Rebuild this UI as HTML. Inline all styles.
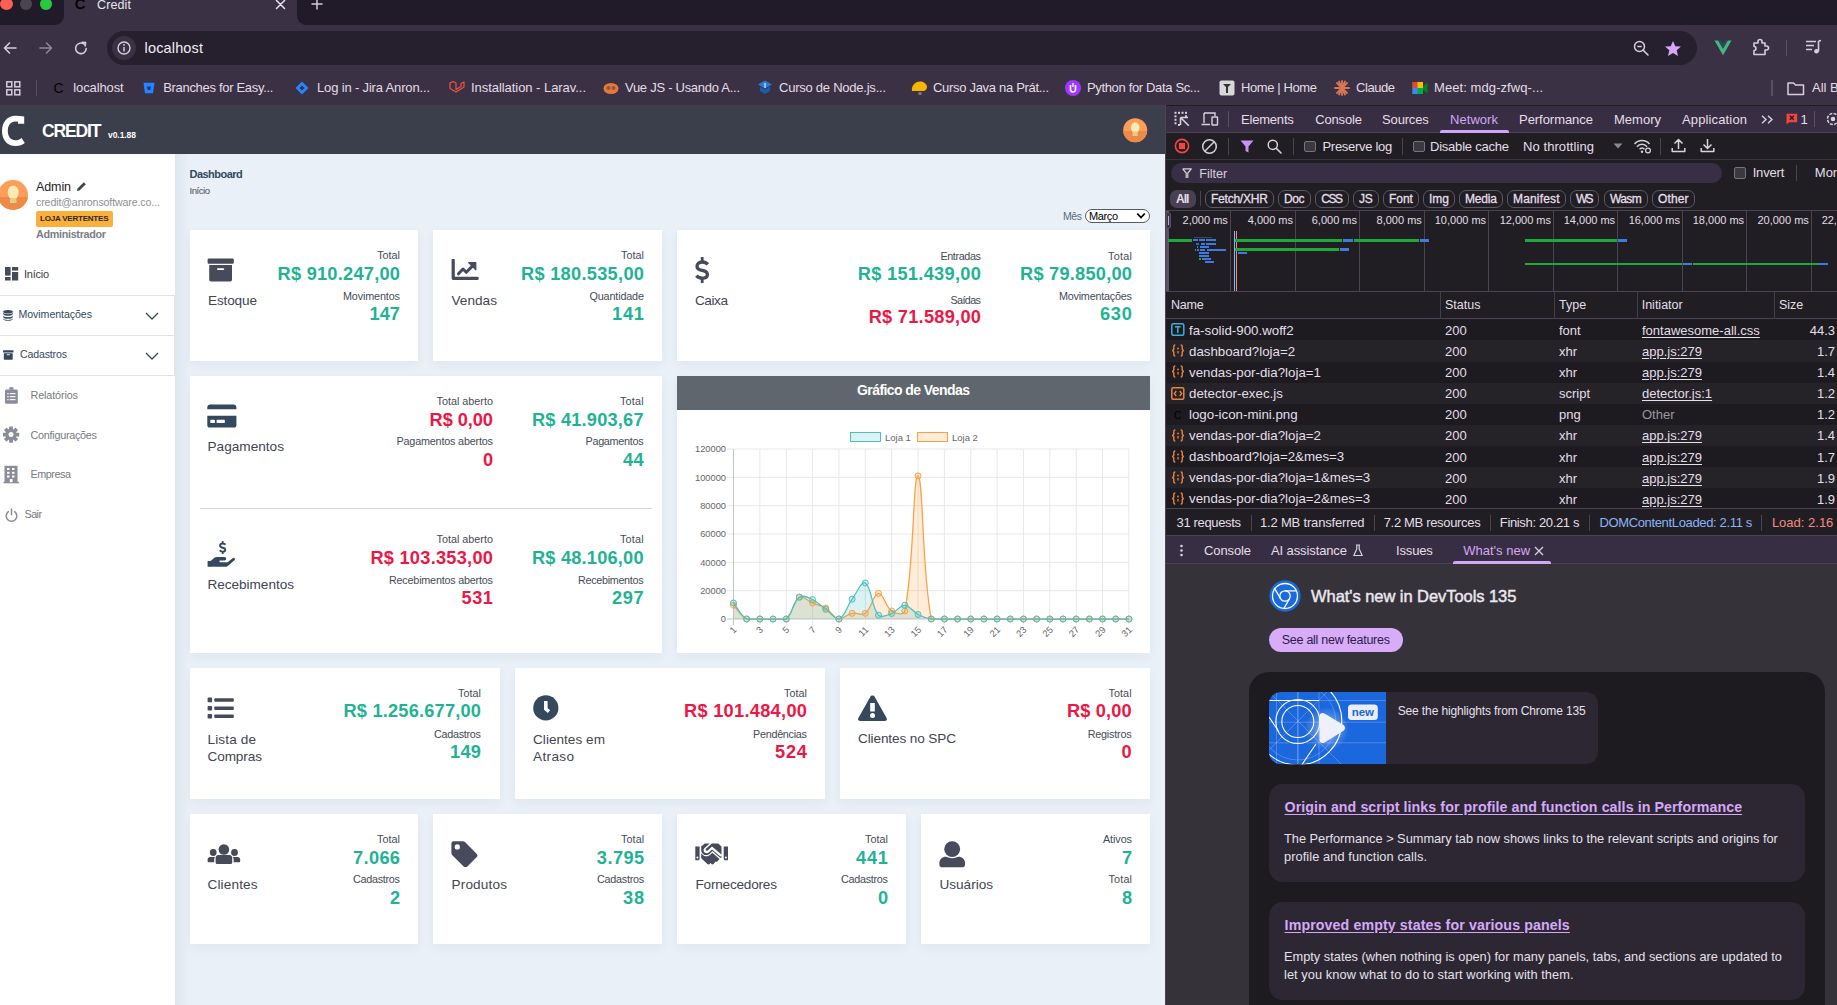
<!DOCTYPE html><html><head><meta charset="utf-8"><style>
html,body{margin:0;padding:0;}
body{width:1837px;height:1005px;position:relative;overflow:hidden;font-family:"Liberation Sans",sans-serif;background:#e9f0f7;}
.t{position:absolute;white-space:pre;}
.r{position:absolute;display:block;}
</style></head><body>
<div class="r" style="left:0px;top:0px;width:1837px;height:105px;background:#3a3244;"></div>
<div class="r" style="left:0px;top:0px;width:64px;height:25px;background:#211b29;border-radius:0 0 9px 0;"></div>
<div class="r" style="left:297px;top:0px;width:1540px;height:25px;background:#211b29;border-radius:0 0 0 9px;"></div>
<div class="r" style="left:0px;top:-2px;width:13px;height:12px;border-radius:50%;background:#fe5f57;"></div>
<div class="r" style="left:20px;top:-2px;width:12px;height:12px;border-radius:50%;background:#4a4550;"></div>
<div class="r" style="left:40px;top:-2px;width:12px;height:12px;border-radius:50%;background:#28c840;"></div>
<div class="t " style="left:75.00px;top:-3.18px;font-size:14px;line-height:15.65px;color:#000;-webkit-text-stroke:0.5px #000;">C</div>
<div class="t " style="left:97.00px;top:-1.83px;font-size:12.5px;line-height:13.98px;color:#ece6f0;letter-spacing:0.131px;">Credit</div>
<svg class="r" style="left:275px;top:0px;" width="11" height="10" viewBox="0 0 11 10"><path d="M1.5 0.5 L9.5 8.5 M9.5 0.5 L1.5 8.5" stroke="#e8e0ee" stroke-width="1.5" stroke-linecap="round"/></svg>
<svg class="r" style="left:311px;top:-1px;" width="12" height="11" viewBox="0 0 12 11"><path d="M6 0 V10 M1 5 H11" stroke="#d6cadf" stroke-width="1.5" stroke-linecap="round"/></svg>
<svg class="r" style="left:2px;top:40px;" width="16" height="16" viewBox="0 0 16 16"><path d="M14 8 H2.5 M7.5 3 L2.5 8 L7.5 13" stroke="#d7cde0" stroke-width="1.6" fill="none" stroke-linecap="round" stroke-linejoin="round"/></svg>
<svg class="r" style="left:38px;top:40px;" width="16" height="16" viewBox="0 0 16 16"><path d="M2 8 H13.5 M8.5 3 L13.5 8 L8.5 13" stroke="#8f8599" stroke-width="1.6" fill="none" stroke-linecap="round" stroke-linejoin="round"/></svg>
<svg class="r" style="left:73px;top:40px;" width="16" height="16" viewBox="0 0 16 16"><path d="M13.2 8.5 A5.3 5.3 0 1 1 11.2 4.2" stroke="#d7cde0" stroke-width="1.6" fill="none" stroke-linecap="round"/><path d="M9.2 2.2 L12.6 2.6 L12.2 6" stroke="#d7cde0" stroke-width="1.6" fill="none" stroke-linecap="round" stroke-linejoin="round"/></svg>
<div class="r" style="left:107px;top:31px;width:1590px;height:34px;background:#261f2e;border-radius:17px;"></div>
<div class="r" style="left:112px;top:36px;width:24px;height:24px;border-radius:50%;background:#3a3244;"></div>
<svg class="r" style="left:117px;top:41px;" width="14" height="14" viewBox="0 0 14 14"><circle cx="7" cy="7" r="6" stroke="#d7cde0" stroke-width="1.4" fill="none"/><path d="M7 6 V10.5" stroke="#d7cde0" stroke-width="1.5"/><circle cx="7" cy="3.9" r="0.9" fill="#d7cde0"/></svg>
<div class="t " style="left:144.60px;top:39.86px;font-size:14.5px;line-height:16.21px;color:#f1ecf4;letter-spacing:0.146px;">localhost</div>
<svg class="r" style="left:1633px;top:40px;" width="17" height="17" viewBox="0 0 17 17"><circle cx="6.5" cy="6.5" r="5" stroke="#d7cde0" stroke-width="1.5" fill="none"/><path d="M4.3 6.5 H8.7" stroke="#d7cde0" stroke-width="1.5"/><path d="M10.2 10.2 L15 15" stroke="#d7cde0" stroke-width="1.6" stroke-linecap="round"/></svg>
<svg class="r" style="left:1664px;top:40px;" width="18" height="17" viewBox="0 0 18 17"><path d="M9 1 L11.3 6.2 L17 6.6 L12.7 10.3 L14 16 L9 13 L4 16 L5.3 10.3 L1 6.6 L6.7 6.2 Z" fill="#d6a6fb"/></svg>
<svg class="r" style="left:1714px;top:40px;" width="18" height="16" viewBox="0 0 18 16"><path d="M0.5 0.5 H4.2 L9 8.8 L13.8 0.5 H17.5 L9 15.3 Z" fill="#41b883"/><path d="M4.2 0.5 H7 L9 3.9 L11 0.5 H13.8 L9 8.8 Z" fill="#34495e"/></svg>
<svg class="r" style="left:1751px;top:38px;" width="19" height="19" viewBox="0 0 19 19"><path d="M3 5 H7 V3.5 A2 2 0 0 1 11 3.5 V5 H14 V8 H15.5 A2 2 0 0 1 15.5 12 H14 V16.5 H3 V12.5 A2 2 0 0 0 3 8.5 Z" stroke="#d7cde0" stroke-width="1.6" fill="none" stroke-linejoin="round"/></svg>
<div class="r" style="left:1785.5px;top:40px;width:1.5px;height:16px;background:#5a5063;"></div>
<svg class="r" style="left:1805px;top:39px;" width="17" height="16" viewBox="0 0 17 16"><path d="M1 2.5 H11 M1 6.5 H9 M1 10.5 H7" stroke="#d7cde0" stroke-width="1.6"/><path d="M13.5 2 V12" stroke="#d7cde0" stroke-width="1.6"/><path d="M13.5 2 L16 1.5" stroke="#d7cde0" stroke-width="1.6"/><circle cx="11.5" cy="12.3" r="2.3" fill="#d7cde0"/></svg>
<svg class="r" style="left:6px;top:81px;" width="15" height="15" viewBox="0 0 15 15"><rect x="0.8" y="0.8" width="5" height="5" stroke="#d7cde0" stroke-width="1.5" fill="none"/><rect x="8.8" y="0.8" width="5" height="5" stroke="#d7cde0" stroke-width="1.5" fill="none"/><rect x="0.8" y="8.8" width="5" height="5" stroke="#d7cde0" stroke-width="1.5" fill="none"/><rect x="8.8" y="8.8" width="5" height="5" stroke="#d7cde0" stroke-width="1.5" fill="none"/></svg>
<div class="r" style="left:35.5px;top:80px;width:1.5px;height:16px;background:#5a5063;"></div>
<div class="t " style="left:73.30px;top:81.22px;font-size:13px;line-height:14.53px;color:#e3dde8;letter-spacing:-0.114px;">localhost</div>
<div class="t " style="left:163.20px;top:81.22px;font-size:13px;line-height:14.53px;color:#e3dde8;letter-spacing:-0.310px;">Branches for Easy...</div>
<div class="t " style="left:317.00px;top:81.22px;font-size:13px;line-height:14.53px;color:#e3dde8;letter-spacing:-0.159px;">Log in - Jira Anron...</div>
<div class="t " style="left:471.00px;top:81.22px;font-size:13px;line-height:14.53px;color:#e3dde8;letter-spacing:-0.050px;">Installation - Larav...</div>
<div class="t " style="left:625.00px;top:81.22px;font-size:13px;line-height:14.53px;color:#e3dde8;letter-spacing:-0.273px;">Vue JS - Usando A...</div>
<div class="t " style="left:779.00px;top:81.22px;font-size:13px;line-height:14.53px;color:#e3dde8;letter-spacing:-0.238px;">Curso de Node.js...</div>
<div class="t " style="left:933.00px;top:81.22px;font-size:13px;line-height:14.53px;color:#e3dde8;letter-spacing:-0.306px;">Curso Java na Prát...</div>
<div class="t " style="left:1087.00px;top:81.22px;font-size:13px;line-height:14.53px;color:#e3dde8;letter-spacing:-0.347px;">Python for Data Sc...</div>
<div class="t " style="left:1241.00px;top:81.22px;font-size:13px;line-height:14.53px;color:#e3dde8;letter-spacing:-0.396px;">Home | Home</div>
<div class="t " style="left:1356.00px;top:81.22px;font-size:13px;line-height:14.53px;color:#e3dde8;letter-spacing:-0.440px;">Claude</div>
<div class="t " style="left:1434.00px;top:81.22px;font-size:13px;line-height:14.53px;color:#e3dde8;letter-spacing:0.080px;">Meet: mdg-zfwq-...</div>
<div class="t " style="left:1812.00px;top:81.22px;font-size:13px;line-height:14.53px;color:#e3dde8;">All Bookmarks</div>
<div class="t " style="left:53.50px;top:80.82px;font-size:14px;line-height:15.65px;color:#000;">C</div>
<svg class="r" style="left:143px;top:82px;" width="12" height="12" viewBox="0 0 12 12"><path d="M0.5 0.8 H11.5 L10 11.2 H2 Z" fill="#2684ff"/><path d="M4 4.5 H8 L7.3 8 H4.7 Z" fill="#0c3a8f"/></svg>
<svg class="r" style="left:295px;top:81px;" width="14" height="14" viewBox="0 0 14 14"><path d="M7 0.5 L13.5 7 L7 13.5 L0.5 7 Z" fill="#2684ff"/><path d="M7 4.5 L9.5 7 L7 9.5 L4.5 7 Z" fill="#3a3244"/></svg>
<svg class="r" style="left:449px;top:80px;" width="16" height="16" viewBox="0 0 16 16"><path d="M1 3 L4 1.5 L7 3 V9.5 L12 6.5 V3.5 L15 2 V7 L7 12 L1 8.5 Z" stroke="#f05340" stroke-width="1.2" fill="none" stroke-linejoin="round"/></svg>
<svg class="r" style="left:603px;top:81px;" width="16" height="14" viewBox="0 0 16 14"><ellipse cx="8" cy="7.5" rx="7.5" ry="5.5" fill="#e8783a"/><circle cx="5.5" cy="7" r="2" fill="#8a5a3c"/><circle cx="10.5" cy="7" r="2" fill="#8a5a3c"/></svg>
<svg class="r" style="left:757px;top:80px;" width="16" height="16" viewBox="0 0 16 16"><path d="M8 0.5 L15 4.5 L8 8.5 L1 4.5 Z" fill="#2a7ad8"/><path d="M3 6.5 V11 L8 14 L13 11 V6.5 L8 9.5 Z" fill="#1b5bb0"/><path d="M8 3 V8" stroke="#fff" stroke-width="1"/></svg>
<svg class="r" style="left:910px;top:80px;" width="18" height="16" viewBox="0 0 18 16"><path d="M2 11 C1 6 5 1.5 10 1.5 C14 1.5 17 4 17 7 C17 9 15.5 11 13 11 Z" fill="#f7b500"/><circle cx="10" cy="13.5" r="1.8" fill="#777"/></svg>
<svg class="r" style="left:1065px;top:80px;" width="16" height="16" viewBox="0 0 16 16"><circle cx="8" cy="8" r="8" fill="#a238ff"/><path d="M5.5 5 V9.5 A2.5 2.5 0 0 0 10.5 9.5 V5" stroke="#fff" stroke-width="1.6" fill="none"/><path d="M8 3 V7" stroke="#fff" stroke-width="1.3"/></svg>
<svg class="r" style="left:1219px;top:80px;" width="16" height="16" viewBox="0 0 16 16"><rect x="0.5" y="0.5" width="15" height="15" rx="2" fill="#d8d8d8"/><path d="M4 4 H12 L9 7 V13 H7 V7 Z" fill="#333"/></svg>
<svg class="r" style="left:1334px;top:80px;" width="16" height="16" viewBox="0 0 16 16"><g stroke="#d97757" stroke-width="1.8" stroke-linecap="round"><path d="M8 1 V15"/><path d="M1 8 H15"/><path d="M3 3 L13 13"/><path d="M13 3 L3 13"/><path d="M5 1.5 L11 14.5"/><path d="M11 1.5 L5 14.5"/></g></svg>
<svg class="r" style="left:1412px;top:81px;" width="16" height="14" viewBox="0 0 16 14"><rect x="0.5" y="1" width="10.5" height="12" fill="#00ac47"/><rect x="0.5" y="1" width="5" height="6" fill="#ea4335"/><rect x="0.5" y="7" width="5" height="6" fill="#4285f4"/><rect x="5.5" y="1" width="5.5" height="6" fill="#fbbc04"/><path d="M11 5 L15.5 2 V12 L11 9 Z" fill="#00832d"/></svg>
<div class="r" style="left:1771px;top:80px;width:1.5px;height:16px;background:#5a5063;"></div>
<svg class="r" style="left:1787px;top:81px;" width="18" height="15" viewBox="0 0 18 15"><path d="M1 2 H6.5 L8.5 4 H16.5 V13.5 H1 Z" stroke="#d7cde0" stroke-width="1.5" fill="none" stroke-linejoin="round"/></svg>
<div class="r" style="left:175px;top:154px;width:991px;height:851px;background:#e9f0f7;"></div>
<div class="r" style="left:0px;top:105px;width:1166px;height:49px;background:#3b3f4b;"></div>
<div class="r" style="left:0px;top:105px;width:1837px;height:1px;background:#433d47;"></div>
<svg class="r" style="left:0px;top:108px;" width="30" height="42" viewBox="0 0 30 42"><path d="M24.2 8.5 C21.5 8 18.5 7.8 15.5 7.8 C7 7.8 2 14.5 2 23 C2 32 7.5 38 15.5 38 C19.5 38 22.5 36.8 24.8 35 L21.6 30 C19.8 31.5 17.8 32.3 15.5 32.3 C10.7 32.3 7.8 28.5 7.8 23 C7.8 17.3 10.7 13.5 15.5 13.5 C16.5 13.5 17.4 13.6 18 13.8 L18 15.8 L24.2 15.8 Z" fill="#fff"/></svg>
<div class="t " style="left:42.00px;top:121.64px;font-size:17.5px;line-height:19.57px;color:#ffffff;font-weight:700;letter-spacing:-1.128px;">CREDIT</div>
<div class="t " style="left:108.00px;top:130.80px;font-size:8.5px;line-height:9.50px;color:#ffffff;font-weight:700;letter-spacing:-0.060px;">v0.1.88</div>
<svg class="r" style="left:1123px;top:118px;" width="25" height="25" viewBox="0 0 25 25"><defs><clipPath id="hc"><circle cx="12.2" cy="12.3" r="12"/></clipPath></defs><g clip-path="url(#hc)"><rect x="0" y="0" width="25" height="25" fill="#fc9d5a"/><rect x="0" y="13" width="25" height="12" fill="#ee8a48"/><ellipse cx="12.2" cy="9.5" rx="4.3" ry="5.3" fill="#ffe9b5"/><rect x="9.6" y="13.5" width="5" height="4.5" fill="#e3cd83"/></g></svg>
<div class="r" style="left:0px;top:154px;width:175px;height:851px;background:#ffffff;"></div>
<div class="r" style="left:175px;top:154px;width:14px;height:851px;background:linear-gradient(90deg,rgba(120,140,170,0.10),rgba(120,140,170,0));"></div>
<div class="r" style="left:0px;top:154px;width:175px;height:6px;background:linear-gradient(180deg,rgba(0,0,0,0.025),rgba(0,0,0,0));"></div>
<svg class="r" style="left:-3px;top:179px;" width="32" height="32" viewBox="0 0 32 32"><defs><clipPath id="ac"><circle cx="16" cy="16" r="15"/></clipPath></defs><g clip-path="url(#ac)"><rect x="0" y="0" width="32" height="32" fill="#fc9d5a"/><rect x="0" y="18" width="32" height="14" fill="#ee8a48"/><ellipse cx="16.2" cy="13.5" rx="5.5" ry="7" fill="#ffe9b5"/><rect x="13" y="19" width="6.5" height="5" fill="#e3cd83"/></g></svg>
<div class="t " style="left:36.00px;top:179.68px;font-size:12.5px;line-height:13.98px;color:#222222;letter-spacing:-0.108px;">Admin</div>
<svg class="r" style="left:76px;top:181px;" width="11" height="11" viewBox="0 0 11 11"><path d="M1 10 L1.5 7.5 L7.8 1.2 L9.8 3.2 L3.5 9.5 Z" fill="#3f4553"/></svg>
<div class="t " style="left:36.00px;top:197.40px;font-size:10.6px;line-height:11.85px;color:#8d9097;letter-spacing:-0.113px;">credit@anronsoftware.co...</div>
<div class="r" style="left:36px;top:211px;width:77px;height:16px;background:#fbb03b;border-radius:2px;"></div>
<div class="t " style="left:40.00px;top:214.75px;font-size:8px;line-height:8.94px;color:#2a2a2a;font-weight:700;letter-spacing:-0.213px;">LOJA VERTENTES</div>
<div class="t " style="left:36.00px;top:228.22px;font-size:10.8px;line-height:12.07px;color:#7b7e85;font-weight:700;letter-spacing:-0.317px;">Administrador</div>
<svg class="r" style="left:5px;top:267px;" width="14" height="14" viewBox="0 0 14 14"><rect x="0" y="0" width="5.6" height="8.6" fill="#464a5a"/><rect x="0" y="10" width="5.6" height="3.5" fill="#464a5a"/><rect x="7" y="0" width="6.2" height="3.6" fill="#464a5a"/><rect x="7" y="5" width="6.2" height="8.5" fill="#464a5a"/></svg>
<div class="t " style="left:24.00px;top:267.53px;font-size:11px;line-height:12.30px;color:#3a3d45;letter-spacing:-0.258px;">Início</div>
<div class="r" style="left:0px;top:295px;width:174px;height:1px;background:#e3e3e3;"></div>
<div class="r" style="left:0px;top:335px;width:174px;height:1px;background:#e3e3e3;"></div>
<div class="r" style="left:0px;top:375px;width:174px;height:1px;background:#e3e3e3;"></div>
<div class="r" style="left:174px;top:295px;width:1px;height:81px;background:#e3e3e3;"></div>
<svg class="r" style="left:3px;top:310px;" width="10" height="11" viewBox="0 0 10 11"><ellipse cx="5" cy="1.8" rx="4.8" ry="1.8" fill="#34495e"/><path d="M0.2 2.5 V4 C0.2 5 2.3 5.8 5 5.8 C7.7 5.8 9.8 5 9.8 4 V2.5 C9.8 3.5 7.7 4.2 5 4.2 C2.3 4.2 0.2 3.5 0.2 2.5Z" fill="#34495e"/><path d="M0.2 5.5 V7 C0.2 8 2.3 8.8 5 8.8 C7.7 8.8 9.8 8 9.8 7 V5.5 C9.8 6.5 7.7 7.2 5 7.2 C2.3 7.2 0.2 6.5 0.2 5.5Z" fill="#34495e"/><path d="M0.2 8.3 V9 C0.2 10 2.3 10.8 5 10.8 C7.7 10.8 9.8 10 9.8 9 V8.3 C9.8 9.3 7.7 10 5 10 C2.3 10 0.2 9.3 0.2 8.3Z" fill="#34495e"/></svg>
<div class="t " style="left:18.50px;top:308.90px;font-size:10.6px;line-height:11.85px;color:#34495e;letter-spacing:-0.061px;">Movimentações</div>
<svg class="r" style="left:145px;top:312px;" width="14" height="8" viewBox="0 0 14 8"><path d="M1 1 L7 7 L13 1" stroke="#34495e" stroke-width="1.3" fill="none"/></svg>
<svg class="r" style="left:3px;top:350px;" width="11" height="10" viewBox="0 0 11 10"><rect x="0" y="0.3" width="10.5" height="2.2" rx="0.5" fill="#34495e"/><rect x="0.8" y="3.3" width="8.9" height="6.4" rx="0.6" fill="#34495e"/><rect x="3.7" y="4.3" width="3.1" height="0.9" fill="#fff"/></svg>
<div class="t " style="left:20.00px;top:348.90px;font-size:10.6px;line-height:11.85px;color:#34495e;letter-spacing:-0.164px;">Cadastros</div>
<svg class="r" style="left:145px;top:352px;" width="14" height="8" viewBox="0 0 14 8"><path d="M1 1 L7 7 L13 1" stroke="#34495e" stroke-width="1.3" fill="none"/></svg>
<svg class="r" style="left:5px;top:387px;" width="13" height="17" viewBox="0 0 13 17"><rect x="0" y="2.5" width="12.8" height="14.3" rx="1.5" fill="#8a8c99"/><path d="M4 2.5 A2.4 2.4 0 0 1 8.8 2.5 Z" fill="#8a8c99"/><circle cx="6.4" cy="1.6" r="1.4" fill="#8a8c99"/><g fill="#fff"><rect x="2.3" y="6" width="1.3" height="1.3"/><rect x="4.7" y="6.1" width="5.8" height="1.1"/><rect x="2.3" y="9" width="1.3" height="1.3"/><rect x="4.7" y="9.1" width="5.8" height="1.1"/><rect x="2.3" y="12" width="1.3" height="1.3"/><rect x="4.7" y="12.1" width="5.8" height="1.1"/></g></svg>
<div class="t " style="left:30.50px;top:389.22px;font-size:10.8px;line-height:12.07px;color:#77797f;letter-spacing:-0.125px;">Relatórios</div>
<svg class="r" style="left:3px;top:426px;" width="17" height="18" viewBox="0 0 17 18"><rect x="6.10" y="0.40" width="3.8" height="4" rx="0.6" fill="#8a8c99" transform="rotate(0 8 8.6)"/><rect x="6.10" y="0.40" width="3.8" height="4" rx="0.6" fill="#8a8c99" transform="rotate(45 8 8.6)"/><rect x="6.10" y="0.40" width="3.8" height="4" rx="0.6" fill="#8a8c99" transform="rotate(90 8 8.6)"/><rect x="6.10" y="0.40" width="3.8" height="4" rx="0.6" fill="#8a8c99" transform="rotate(135 8 8.6)"/><rect x="6.10" y="0.40" width="3.8" height="4" rx="0.6" fill="#8a8c99" transform="rotate(180 8 8.6)"/><rect x="6.10" y="0.40" width="3.8" height="4" rx="0.6" fill="#8a8c99" transform="rotate(225 8 8.6)"/><rect x="6.10" y="0.40" width="3.8" height="4" rx="0.6" fill="#8a8c99" transform="rotate(270 8 8.6)"/><rect x="6.10" y="0.40" width="3.8" height="4" rx="0.6" fill="#8a8c99" transform="rotate(315 8 8.6)"/><circle cx="8" cy="8.6" r="5.6" fill="#8a8c99"/><circle cx="8" cy="8.6" r="2.5" fill="#fff"/></svg>
<div class="t " style="left:30.50px;top:429.22px;font-size:10.8px;line-height:12.07px;color:#77797f;letter-spacing:-0.262px;">Configurações</div>
<svg class="r" style="left:3px;top:465px;" width="17" height="19" viewBox="0 0 17 19"><rect x="1.5" y="0.8" width="13" height="17" fill="#8a8c99"/><rect x="0.5" y="16.8" width="15.5" height="1.5" fill="#8a8c99"/><g fill="#fff"><rect x="4" y="3" width="2.5" height="2"/><rect x="9" y="3" width="2.5" height="2"/><rect x="4" y="6.8" width="2.5" height="2"/><rect x="9" y="6.8" width="2.5" height="2"/><rect x="4" y="10.5" width="2.5" height="2"/><rect x="9" y="10.5" width="2.5" height="2"/><rect x="6.8" y="14" width="2.8" height="3.2"/></g></svg>
<div class="t " style="left:30.50px;top:468.22px;font-size:10.8px;line-height:12.07px;color:#77797f;letter-spacing:-0.453px;">Empresa</div>
<svg class="r" style="left:5px;top:508px;" width="13" height="14" viewBox="0 0 13 14"><path d="M3.4 3.6 A5.3 5.3 0 1 0 9.6 3.6" stroke="#8a8c99" stroke-width="1.5" fill="none" stroke-linecap="round"/><path d="M6.5 1 V6.8" stroke="#8a8c99" stroke-width="1.5" stroke-linecap="round"/></svg>
<div class="t " style="left:24.50px;top:508.22px;font-size:10.8px;line-height:12.07px;color:#77797f;letter-spacing:-0.569px;">Sair</div>
<div class="t " style="left:189.50px;top:168.03px;font-size:11px;line-height:12.30px;color:#34495e;font-weight:700;letter-spacing:-0.520px;">Dashboard</div>
<div class="t " style="left:189.50px;top:185.80px;font-size:9.6px;line-height:10.73px;color:#4a4f57;letter-spacing:-0.489px;">Início</div>
<div class="t " style="left:1063.00px;top:210.89px;font-size:10.5px;line-height:11.74px;color:#5a6b7b;letter-spacing:-0.418px;">Mês</div>
<div class="r" style="left:1085px;top:209px;width:65px;height:14px;background:#ffffff;border:1px solid #555b62;border-radius:7px;box-sizing:border-box;"></div>
<div class="t " style="left:1089.00px;top:209.83px;font-size:11px;line-height:12.30px;color:#000000;letter-spacing:-0.391px;">Março</div>
<svg class="r" style="left:1136px;top:212px;" width="10" height="8" viewBox="0 0 10 8"><path d="M1.2 1.5 L5 5.5 L8.8 1.5" stroke="#000" stroke-width="1.8" fill="none"/></svg>
<div class="r" style="left:190px;top:230px;width:228px;height:131px;background:#fff;box-shadow:0 4px 10px rgba(40,60,90,0.05);"></div>
<div class="r" style="left:433px;top:230px;width:229px;height:131px;background:#fff;box-shadow:0 4px 10px rgba(40,60,90,0.05);"></div>
<div class="r" style="left:677px;top:230px;width:473px;height:131px;background:#fff;box-shadow:0 4px 10px rgba(40,60,90,0.05);"></div>
<svg class="r" style="left:207px;top:258px;" width="27" height="24" viewBox="0 0 27 24"><rect x="0.6" y="0.6" width="26.2" height="5.1" rx="1.2" fill="#464a5a"/><path d="M2.2 7 H25 V21.8 A1.7 1.7 0 0 1 23.3 23.5 H3.9 A1.7 1.7 0 0 1 2.2 21.8 Z" fill="#464a5a"/><rect x="10" y="10.3" width="7.2" height="1.7" rx="0.8" fill="#fff"/></svg>
<div class="t " style="left:208.00px;top:292.98px;font-size:13.6px;line-height:15.20px;color:#3f4553;letter-spacing:-0.151px;">Estoque</div>
<div class="t " style="left:377.20px;top:249.12px;font-size:10.8px;line-height:12.07px;color:#454b57;">Total</div>
<div class="t " style="left:277.60px;top:264.11px;font-size:18.2px;line-height:20.35px;color:#1fb394;font-weight:700;letter-spacing:0.249px;">R$ 910.247,00</div>
<div class="t " style="left:343.00px;top:290.12px;font-size:10.8px;line-height:12.07px;color:#454b57;letter-spacing:-0.136px;">Movimentos</div>
<div class="t " style="left:369.50px;top:303.91px;font-size:18.2px;line-height:20.35px;color:#1fb394;font-weight:700;letter-spacing:0.067px;">147</div>
<svg class="r" style="left:451px;top:259px;" width="28" height="22" viewBox="0 0 28 22"><path d="M2.2 1.2 V19.3 H26.3" stroke="#464a5a" stroke-width="3.2" fill="none" stroke-linecap="round" stroke-linejoin="round"/><path d="M7.5 14.8 L12 10 L15.3 13.3 L21.8 6.6" stroke="#464a5a" stroke-width="3" fill="none" stroke-linejoin="round" stroke-linecap="round"/><path d="M17.6 3.6 H24.8 V10.8 Z" fill="#464a5a" stroke="#464a5a" stroke-width="1.2" stroke-linejoin="round"/></svg>
<div class="t " style="left:451.50px;top:292.98px;font-size:13.6px;line-height:15.20px;color:#3f4553;letter-spacing:0.025px;">Vendas</div>
<div class="t " style="left:621.00px;top:249.12px;font-size:10.8px;line-height:12.07px;color:#454b57;letter-spacing:0.047px;">Total</div>
<div class="t " style="left:521.00px;top:264.11px;font-size:18.2px;line-height:20.35px;color:#1fb394;font-weight:700;letter-spacing:0.299px;">R$ 180.535,00</div>
<div class="t " style="left:589.50px;top:290.12px;font-size:10.8px;line-height:12.07px;color:#454b57;letter-spacing:-0.150px;">Quantidade</div>
<div class="t " style="left:612.00px;top:303.91px;font-size:18.2px;line-height:20.35px;color:#1fb394;font-weight:700;letter-spacing:0.817px;">141</div>
<svg class="r" style="left:694px;top:256px;" width="18" height="28" viewBox="0 0 18 28"><path d="M13.80 8.40 C12.40 6.80 10.60 6.00 8.20 6.00 C5.00 6.00 3.00 7.80 3.00 10.40 C3.00 13.20 5.60 13.80 8.20 14.40 C11.00 15.00 13.40 15.80 13.40 18.40 C13.40 20.80 11.20 22.20 8.20 22.20 C5.80 22.20 3.80 21.20 2.40 19.60" stroke="#464a5a" stroke-width="3.3" fill="none"/><path d="M8.20 1.00 V6.20 M8.20 21.80 V27.00" stroke="#464a5a" stroke-width="2.8"/></svg>
<div class="t " style="left:695.00px;top:292.98px;font-size:13.6px;line-height:15.20px;color:#3f4553;letter-spacing:-0.443px;">Caixa</div>
<div class="t " style="left:940.40px;top:249.62px;font-size:10.8px;line-height:12.07px;color:#454b57;letter-spacing:-0.375px;">Entradas</div>
<div class="t " style="left:857.70px;top:264.31px;font-size:18.2px;line-height:20.35px;color:#1fb394;font-weight:700;letter-spacing:0.324px;">R$ 151.439,00</div>
<div class="t " style="left:950.50px;top:293.52px;font-size:10.8px;line-height:12.07px;color:#454b57;letter-spacing:-0.625px;">Saídas</div>
<div class="t " style="left:868.70px;top:307.01px;font-size:18.2px;line-height:20.35px;color:#ec1745;font-weight:700;letter-spacing:0.274px;">R$ 71.589,00</div>
<div class="t " style="left:1108.00px;top:249.62px;font-size:10.8px;line-height:12.07px;color:#454b57;letter-spacing:0.297px;">Total</div>
<div class="t " style="left:1020.00px;top:264.31px;font-size:18.2px;line-height:20.35px;color:#1fb394;font-weight:700;letter-spacing:0.246px;">R$ 79.850,00</div>
<div class="t " style="left:1058.90px;top:290.42px;font-size:10.8px;line-height:12.07px;color:#454b57;letter-spacing:-0.211px;">Movimentações</div>
<div class="t " style="left:1099.90px;top:303.61px;font-size:18.2px;line-height:20.35px;color:#1fb394;font-weight:700;letter-spacing:0.867px;">630</div>
<div class="r" style="left:190px;top:376px;width:472px;height:277px;background:#fff;box-shadow:0 4px 10px rgba(40,60,90,0.05);"></div>
<div class="r" style="left:677px;top:376px;width:473px;height:277px;background:#fff;box-shadow:0 4px 10px rgba(40,60,90,0.05);"></div>
<svg class="r" style="left:207px;top:404px;" width="30" height="24" viewBox="0 0 30 24"><path d="M0.3 5.2 V3 A2.6 2.6 0 0 1 2.9 0.5 H26.8 A2.6 2.6 0 0 1 29.4 3 V5.2 Z" fill="#34495e"/><path d="M0.3 11.8 H29.4 V21 A2.6 2.6 0 0 1 26.8 23.6 H2.9 A2.6 2.6 0 0 1 0.3 21 Z" fill="#34495e"/><rect x="3.3" y="15.8" width="4.6" height="3.3" rx="0.6" fill="#fff"/><rect x="9.6" y="15.8" width="8.2" height="3.3" rx="0.6" fill="#fff"/></svg>
<div class="t " style="left:207.50px;top:438.68px;font-size:13.6px;line-height:15.20px;color:#3f4553;letter-spacing:0.015px;">Pagamentos</div>
<div class="t " style="left:436.50px;top:395.22px;font-size:10.8px;line-height:12.07px;color:#454b57;letter-spacing:0.006px;">Total aberto</div>
<div class="t " style="left:429.60px;top:409.81px;font-size:18.2px;line-height:20.35px;color:#ec1745;font-weight:700;letter-spacing:-0.058px;">R$ 0,00</div>
<div class="t " style="left:396.50px;top:435.22px;font-size:10.8px;line-height:12.07px;color:#454b57;letter-spacing:-0.186px;">Pagamentos abertos</div>
<div class="t " style="left:482.88px;top:449.81px;font-size:18.2px;line-height:20.35px;color:#ec1745;font-weight:700;">0</div>
<div class="t " style="left:620.00px;top:395.22px;font-size:10.8px;line-height:12.07px;color:#454b57;letter-spacing:0.197px;">Total</div>
<div class="t " style="left:532.00px;top:409.81px;font-size:18.2px;line-height:20.35px;color:#1fb394;font-weight:700;letter-spacing:0.210px;">R$ 41.903,67</div>
<div class="t " style="left:585.50px;top:435.22px;font-size:10.8px;line-height:12.07px;color:#454b57;letter-spacing:-0.282px;">Pagamentos</div>
<div class="t " style="left:623.00px;top:449.81px;font-size:18.2px;line-height:20.35px;color:#1fb394;font-weight:700;letter-spacing:0.355px;">44</div>
<div class="r" style="left:200px;top:508px;width:452px;height:1px;background:#d5d5d5;"></div>
<svg class="r" style="left:207px;top:541px;" width="29" height="27" viewBox="0 0 29 27"><path d="M18.50 3.70 C17.80 2.90 16.90 2.50 15.70 2.50 C14.10 2.50 13.10 3.40 13.10 4.70 C13.10 6.10 14.40 6.40 15.70 6.70 C17.10 7.00 18.30 7.40 18.30 8.70 C18.30 9.90 17.20 10.60 15.70 10.60 C14.50 10.60 13.50 10.10 12.80 9.30" stroke="#34495e" stroke-width="1.9" fill="none"/><path d="M15.70 0.00 V2.60 M15.70 10.40 V13.00" stroke="#34495e" stroke-width="1.7"/><path d="M0.6 25.8 V19.9 H3.7 L7.3 16.7 C8 16.2 8.8 16 9.8 16 H17.5 A1.75 1.75 0 0 1 17.5 19.5 H13 C12.3 19.5 12.3 21.3 13 21.3 H20.5 L26 17 A1.3 1.3 0 0 1 27.7 18.9 L20.5 25.3 C20.2 25.6 19.8 25.8 19.4 25.8 Z" fill="#34495e"/></svg>
<div class="t " style="left:207.50px;top:576.68px;font-size:13.6px;line-height:15.20px;color:#3f4553;letter-spacing:-0.040px;">Recebimentos</div>
<div class="t " style="left:436.50px;top:533.22px;font-size:10.8px;line-height:12.07px;color:#454b57;letter-spacing:0.006px;">Total aberto</div>
<div class="t " style="left:370.40px;top:547.81px;font-size:18.2px;line-height:20.35px;color:#ec1745;font-weight:700;letter-spacing:0.266px;">R$ 103.353,00</div>
<div class="t " style="left:389.00px;top:574.22px;font-size:10.8px;line-height:12.07px;color:#454b57;letter-spacing:-0.214px;">Recebimentos abertos</div>
<div class="t " style="left:461.50px;top:587.81px;font-size:18.2px;line-height:20.35px;color:#ec1745;font-weight:700;letter-spacing:0.567px;">531</div>
<div class="t " style="left:620.00px;top:533.22px;font-size:10.8px;line-height:12.07px;color:#454b57;letter-spacing:0.197px;">Total</div>
<div class="t " style="left:532.00px;top:547.81px;font-size:18.2px;line-height:20.35px;color:#1fb394;font-weight:700;letter-spacing:0.210px;">R$ 48.106,00</div>
<div class="t " style="left:578.00px;top:574.22px;font-size:10.8px;line-height:12.07px;color:#454b57;letter-spacing:-0.312px;">Recebimentos</div>
<div class="t " style="left:612.00px;top:587.81px;font-size:18.2px;line-height:20.35px;color:#1fb394;font-weight:700;letter-spacing:0.617px;">297</div>
<div class="r" style="left:677px;top:376px;width:473px;height:34px;background:#5f666d;"></div>
<div class="t " style="left:857.00px;top:382.72px;font-size:14px;line-height:15.65px;color:#ffffff;font-weight:700;letter-spacing:-0.573px;">Gráfico de Vendas</div>
<svg class="r" style="left:677px;top:410px;" width="473" height="243" viewBox="0 0 473 243"><path d="M50 209.00 H451.90" stroke="#c4c4c4" stroke-width="1"/><path d="M50 180.67 H451.90" stroke="#e8e8e8" stroke-width="1"/><path d="M50 152.33 H451.90" stroke="#e8e8e8" stroke-width="1"/><path d="M50 124.00 H451.90" stroke="#e8e8e8" stroke-width="1"/><path d="M50 95.67 H451.90" stroke="#e8e8e8" stroke-width="1"/><path d="M50 67.33 H451.90" stroke="#e8e8e8" stroke-width="1"/><path d="M50 39.00 H451.90" stroke="#e8e8e8" stroke-width="1"/><path d="M56.50 39 V215" stroke="#c4c4c4" stroke-width="1"/><path d="M82.86 39 V215" stroke="#e8e8e8" stroke-width="1"/><path d="M109.22 39 V215" stroke="#e8e8e8" stroke-width="1"/><path d="M135.58 39 V215" stroke="#e8e8e8" stroke-width="1"/><path d="M161.94 39 V215" stroke="#e8e8e8" stroke-width="1"/><path d="M188.30 39 V215" stroke="#e8e8e8" stroke-width="1"/><path d="M214.66 39 V215" stroke="#e8e8e8" stroke-width="1"/><path d="M241.02 39 V215" stroke="#e8e8e8" stroke-width="1"/><path d="M267.38 39 V215" stroke="#e8e8e8" stroke-width="1"/><path d="M293.74 39 V215" stroke="#e8e8e8" stroke-width="1"/><path d="M320.10 39 V215" stroke="#e8e8e8" stroke-width="1"/><path d="M346.46 39 V215" stroke="#e8e8e8" stroke-width="1"/><path d="M372.82 39 V215" stroke="#e8e8e8" stroke-width="1"/><path d="M399.18 39 V215" stroke="#e8e8e8" stroke-width="1"/><path d="M425.54 39 V215" stroke="#e8e8e8" stroke-width="1"/><path d="M451.90 39 V215" stroke="#e8e8e8" stroke-width="1"/><text x="49" y="212.30" text-anchor="end" font-family="Liberation Sans" font-size="9.3" fill="#666">0</text><text x="49" y="183.97" text-anchor="end" font-family="Liberation Sans" font-size="9.3" fill="#666">20000</text><text x="49" y="155.63" text-anchor="end" font-family="Liberation Sans" font-size="9.3" fill="#666">40000</text><text x="49" y="127.30" text-anchor="end" font-family="Liberation Sans" font-size="9.3" fill="#666">60000</text><text x="49" y="98.97" text-anchor="end" font-family="Liberation Sans" font-size="9.3" fill="#666">80000</text><text x="49" y="70.63" text-anchor="end" font-family="Liberation Sans" font-size="9.3" fill="#666">100000</text><text x="49" y="42.30" text-anchor="end" font-family="Liberation Sans" font-size="9.3" fill="#666">120000</text><text transform="translate(58.00 218.00) rotate(-45)" text-anchor="end" dy="3.2" font-family="Liberation Sans" font-size="9.3" fill="#666">1</text><text transform="translate(84.36 218.00) rotate(-45)" text-anchor="end" dy="3.2" font-family="Liberation Sans" font-size="9.3" fill="#666">3</text><text transform="translate(110.72 218.00) rotate(-45)" text-anchor="end" dy="3.2" font-family="Liberation Sans" font-size="9.3" fill="#666">5</text><text transform="translate(137.08 218.00) rotate(-45)" text-anchor="end" dy="3.2" font-family="Liberation Sans" font-size="9.3" fill="#666">7</text><text transform="translate(163.44 218.00) rotate(-45)" text-anchor="end" dy="3.2" font-family="Liberation Sans" font-size="9.3" fill="#666">9</text><text transform="translate(189.80 218.00) rotate(-45)" text-anchor="end" dy="3.2" font-family="Liberation Sans" font-size="9.3" fill="#666">11</text><text transform="translate(216.16 218.00) rotate(-45)" text-anchor="end" dy="3.2" font-family="Liberation Sans" font-size="9.3" fill="#666">13</text><text transform="translate(242.52 218.00) rotate(-45)" text-anchor="end" dy="3.2" font-family="Liberation Sans" font-size="9.3" fill="#666">15</text><text transform="translate(268.88 218.00) rotate(-45)" text-anchor="end" dy="3.2" font-family="Liberation Sans" font-size="9.3" fill="#666">17</text><text transform="translate(295.24 218.00) rotate(-45)" text-anchor="end" dy="3.2" font-family="Liberation Sans" font-size="9.3" fill="#666">19</text><text transform="translate(321.60 218.00) rotate(-45)" text-anchor="end" dy="3.2" font-family="Liberation Sans" font-size="9.3" fill="#666">21</text><text transform="translate(347.96 218.00) rotate(-45)" text-anchor="end" dy="3.2" font-family="Liberation Sans" font-size="9.3" fill="#666">23</text><text transform="translate(374.32 218.00) rotate(-45)" text-anchor="end" dy="3.2" font-family="Liberation Sans" font-size="9.3" fill="#666">25</text><text transform="translate(400.68 218.00) rotate(-45)" text-anchor="end" dy="3.2" font-family="Liberation Sans" font-size="9.3" fill="#666">27</text><text transform="translate(427.04 218.00) rotate(-45)" text-anchor="end" dy="3.2" font-family="Liberation Sans" font-size="9.3" fill="#666">29</text><text transform="translate(453.40 218.00) rotate(-45)" text-anchor="end" dy="3.2" font-family="Liberation Sans" font-size="9.3" fill="#666">31</text><path d="M56.50 195.26 C61.77 200.75 63.45 205.75 69.68 209.00 C73.99 209.00 77.59 209.00 82.86 209.00 C88.13 209.00 90.77 209.00 96.04 209.00 C101.31 209.00 105.63 209.00 109.22 209.00 C116.17 203.25 115.66 191.27 122.40 187.18 C126.21 184.87 130.25 190.80 135.58 192.99 C140.80 195.13 144.00 195.12 148.76 198.01 C154.55 201.52 156.20 207.84 161.94 209.00 C166.74 209.00 169.62 204.51 175.12 203.33 C180.17 202.25 184.56 206.17 188.30 203.33 C195.10 198.18 195.99 183.85 201.48 183.36 C206.53 182.91 208.07 196.57 214.66 200.98 C218.61 203.62 226.91 205.76 227.84 200.98 C237.45 151.74 235.90 64.36 241.02 65.92 C246.44 67.57 244.54 156.58 254.20 209.00 C255.09 209.00 262.11 209.00 267.38 209.00 C272.65 209.00 275.29 209.00 280.56 209.00 C285.83 209.00 288.47 209.00 293.74 209.00 C299.01 209.00 301.65 209.00 306.92 209.00 C312.19 209.00 314.83 209.00 320.10 209.00 C325.37 209.00 328.01 209.00 333.28 209.00 C338.55 209.00 341.19 209.00 346.46 209.00 C351.73 209.00 354.37 209.00 359.64 209.00 C364.91 209.00 367.55 209.00 372.82 209.00 C378.09 209.00 380.73 209.00 386.00 209.00 C391.27 209.00 393.91 209.00 399.18 209.00 C404.45 209.00 407.09 209.00 412.36 209.00 C417.63 209.00 420.27 209.00 425.54 209.00 C430.81 209.00 433.45 209.00 438.72 209.00 C443.99 209.00 446.63 209.00 451.90 209.00 L451.90 209.0 L56.50 209.0 Z" fill="rgba(255,159,64,0.2)"/><path d="M56.50 195.26 C61.77 200.75 63.45 205.75 69.68 209.00 C73.99 209.00 77.59 209.00 82.86 209.00 C88.13 209.00 90.77 209.00 96.04 209.00 C101.31 209.00 105.63 209.00 109.22 209.00 C116.17 203.25 115.66 191.27 122.40 187.18 C126.21 184.87 130.25 190.80 135.58 192.99 C140.80 195.13 144.00 195.12 148.76 198.01 C154.55 201.52 156.20 207.84 161.94 209.00 C166.74 209.00 169.62 204.51 175.12 203.33 C180.17 202.25 184.56 206.17 188.30 203.33 C195.10 198.18 195.99 183.85 201.48 183.36 C206.53 182.91 208.07 196.57 214.66 200.98 C218.61 203.62 226.91 205.76 227.84 200.98 C237.45 151.74 235.90 64.36 241.02 65.92 C246.44 67.57 244.54 156.58 254.20 209.00 C255.09 209.00 262.11 209.00 267.38 209.00 C272.65 209.00 275.29 209.00 280.56 209.00 C285.83 209.00 288.47 209.00 293.74 209.00 C299.01 209.00 301.65 209.00 306.92 209.00 C312.19 209.00 314.83 209.00 320.10 209.00 C325.37 209.00 328.01 209.00 333.28 209.00 C338.55 209.00 341.19 209.00 346.46 209.00 C351.73 209.00 354.37 209.00 359.64 209.00 C364.91 209.00 367.55 209.00 372.82 209.00 C378.09 209.00 380.73 209.00 386.00 209.00 C391.27 209.00 393.91 209.00 399.18 209.00 C404.45 209.00 407.09 209.00 412.36 209.00 C417.63 209.00 420.27 209.00 425.54 209.00 C430.81 209.00 433.45 209.00 438.72 209.00 C443.99 209.00 446.63 209.00 451.90 209.00" stroke="rgb(255,159,64)" stroke-width="1.25" fill="none"/><path d="M56.50 192.99 C61.77 199.40 63.23 205.09 69.68 209.00 C73.78 209.00 77.59 209.00 82.86 209.00 C88.13 209.00 90.77 209.00 96.04 209.00 C101.31 209.00 105.63 209.00 109.22 209.00 C116.17 203.25 115.49 192.27 122.40 187.18 C126.03 184.51 130.84 187.40 135.58 189.59 C141.38 192.27 143.47 195.48 148.76 199.37 C154.02 203.24 157.65 209.00 161.94 209.00 C168.20 206.58 169.50 196.84 175.12 189.17 C180.04 182.45 184.34 170.62 188.30 173.02 C194.89 177.00 193.86 196.29 201.48 205.10 C204.40 208.48 209.80 205.29 214.66 203.48 C220.34 201.35 222.66 195.06 227.84 195.26 C233.20 195.46 235.37 201.52 241.02 204.47 C245.92 207.02 248.78 208.07 254.20 209.00 C259.32 209.00 262.11 209.00 267.38 209.00 C272.65 209.00 275.29 209.00 280.56 209.00 C285.83 209.00 288.47 209.00 293.74 209.00 C299.01 209.00 301.65 209.00 306.92 209.00 C312.19 209.00 314.83 209.00 320.10 209.00 C325.37 209.00 328.01 209.00 333.28 209.00 C338.55 209.00 341.19 209.00 346.46 209.00 C351.73 209.00 354.37 209.00 359.64 209.00 C364.91 209.00 367.55 209.00 372.82 209.00 C378.09 209.00 380.73 209.00 386.00 209.00 C391.27 209.00 393.91 209.00 399.18 209.00 C404.45 209.00 407.09 209.00 412.36 209.00 C417.63 209.00 420.27 209.00 425.54 209.00 C430.81 209.00 433.45 209.00 438.72 209.00 C443.99 209.00 446.63 209.00 451.90 209.00 L451.90 209.0 L56.50 209.0 Z" fill="rgba(75,192,192,0.2)"/><path d="M56.50 192.99 C61.77 199.40 63.23 205.09 69.68 209.00 C73.78 209.00 77.59 209.00 82.86 209.00 C88.13 209.00 90.77 209.00 96.04 209.00 C101.31 209.00 105.63 209.00 109.22 209.00 C116.17 203.25 115.49 192.27 122.40 187.18 C126.03 184.51 130.84 187.40 135.58 189.59 C141.38 192.27 143.47 195.48 148.76 199.37 C154.02 203.24 157.65 209.00 161.94 209.00 C168.20 206.58 169.50 196.84 175.12 189.17 C180.04 182.45 184.34 170.62 188.30 173.02 C194.89 177.00 193.86 196.29 201.48 205.10 C204.40 208.48 209.80 205.29 214.66 203.48 C220.34 201.35 222.66 195.06 227.84 195.26 C233.20 195.46 235.37 201.52 241.02 204.47 C245.92 207.02 248.78 208.07 254.20 209.00 C259.32 209.00 262.11 209.00 267.38 209.00 C272.65 209.00 275.29 209.00 280.56 209.00 C285.83 209.00 288.47 209.00 293.74 209.00 C299.01 209.00 301.65 209.00 306.92 209.00 C312.19 209.00 314.83 209.00 320.10 209.00 C325.37 209.00 328.01 209.00 333.28 209.00 C338.55 209.00 341.19 209.00 346.46 209.00 C351.73 209.00 354.37 209.00 359.64 209.00 C364.91 209.00 367.55 209.00 372.82 209.00 C378.09 209.00 380.73 209.00 386.00 209.00 C391.27 209.00 393.91 209.00 399.18 209.00 C404.45 209.00 407.09 209.00 412.36 209.00 C417.63 209.00 420.27 209.00 425.54 209.00 C430.81 209.00 433.45 209.00 438.72 209.00 C443.99 209.00 446.63 209.00 451.90 209.00" stroke="rgb(75,192,192)" stroke-width="1.25" fill="none"/><circle cx="56.50" cy="195.26" r="3" fill="rgba(255,159,64,0.2)" stroke="rgb(255,159,64)" stroke-width="1"/><circle cx="69.68" cy="209.00" r="3" fill="rgba(255,159,64,0.2)" stroke="rgb(255,159,64)" stroke-width="1"/><circle cx="82.86" cy="209.00" r="3" fill="rgba(255,159,64,0.2)" stroke="rgb(255,159,64)" stroke-width="1"/><circle cx="96.04" cy="209.00" r="3" fill="rgba(255,159,64,0.2)" stroke="rgb(255,159,64)" stroke-width="1"/><circle cx="109.22" cy="209.00" r="3" fill="rgba(255,159,64,0.2)" stroke="rgb(255,159,64)" stroke-width="1"/><circle cx="122.40" cy="187.18" r="3" fill="rgba(255,159,64,0.2)" stroke="rgb(255,159,64)" stroke-width="1"/><circle cx="135.58" cy="192.99" r="3" fill="rgba(255,159,64,0.2)" stroke="rgb(255,159,64)" stroke-width="1"/><circle cx="148.76" cy="198.01" r="3" fill="rgba(255,159,64,0.2)" stroke="rgb(255,159,64)" stroke-width="1"/><circle cx="161.94" cy="209.00" r="3" fill="rgba(255,159,64,0.2)" stroke="rgb(255,159,64)" stroke-width="1"/><circle cx="175.12" cy="203.33" r="3" fill="rgba(255,159,64,0.2)" stroke="rgb(255,159,64)" stroke-width="1"/><circle cx="188.30" cy="203.33" r="3" fill="rgba(255,159,64,0.2)" stroke="rgb(255,159,64)" stroke-width="1"/><circle cx="201.48" cy="183.36" r="3" fill="rgba(255,159,64,0.2)" stroke="rgb(255,159,64)" stroke-width="1"/><circle cx="214.66" cy="200.98" r="3" fill="rgba(255,159,64,0.2)" stroke="rgb(255,159,64)" stroke-width="1"/><circle cx="227.84" cy="200.98" r="3" fill="rgba(255,159,64,0.2)" stroke="rgb(255,159,64)" stroke-width="1"/><circle cx="241.02" cy="65.92" r="3" fill="rgba(255,159,64,0.2)" stroke="rgb(255,159,64)" stroke-width="1"/><circle cx="254.20" cy="209.00" r="3" fill="rgba(255,159,64,0.2)" stroke="rgb(255,159,64)" stroke-width="1"/><circle cx="267.38" cy="209.00" r="3" fill="rgba(255,159,64,0.2)" stroke="rgb(255,159,64)" stroke-width="1"/><circle cx="280.56" cy="209.00" r="3" fill="rgba(255,159,64,0.2)" stroke="rgb(255,159,64)" stroke-width="1"/><circle cx="293.74" cy="209.00" r="3" fill="rgba(255,159,64,0.2)" stroke="rgb(255,159,64)" stroke-width="1"/><circle cx="306.92" cy="209.00" r="3" fill="rgba(255,159,64,0.2)" stroke="rgb(255,159,64)" stroke-width="1"/><circle cx="320.10" cy="209.00" r="3" fill="rgba(255,159,64,0.2)" stroke="rgb(255,159,64)" stroke-width="1"/><circle cx="333.28" cy="209.00" r="3" fill="rgba(255,159,64,0.2)" stroke="rgb(255,159,64)" stroke-width="1"/><circle cx="346.46" cy="209.00" r="3" fill="rgba(255,159,64,0.2)" stroke="rgb(255,159,64)" stroke-width="1"/><circle cx="359.64" cy="209.00" r="3" fill="rgba(255,159,64,0.2)" stroke="rgb(255,159,64)" stroke-width="1"/><circle cx="372.82" cy="209.00" r="3" fill="rgba(255,159,64,0.2)" stroke="rgb(255,159,64)" stroke-width="1"/><circle cx="386.00" cy="209.00" r="3" fill="rgba(255,159,64,0.2)" stroke="rgb(255,159,64)" stroke-width="1"/><circle cx="399.18" cy="209.00" r="3" fill="rgba(255,159,64,0.2)" stroke="rgb(255,159,64)" stroke-width="1"/><circle cx="412.36" cy="209.00" r="3" fill="rgba(255,159,64,0.2)" stroke="rgb(255,159,64)" stroke-width="1"/><circle cx="425.54" cy="209.00" r="3" fill="rgba(255,159,64,0.2)" stroke="rgb(255,159,64)" stroke-width="1"/><circle cx="438.72" cy="209.00" r="3" fill="rgba(255,159,64,0.2)" stroke="rgb(255,159,64)" stroke-width="1"/><circle cx="451.90" cy="209.00" r="3" fill="rgba(255,159,64,0.2)" stroke="rgb(255,159,64)" stroke-width="1"/><circle cx="56.50" cy="192.99" r="3" fill="rgba(75,192,192,0.2)" stroke="rgb(75,192,192)" stroke-width="1"/><circle cx="69.68" cy="209.00" r="3" fill="rgba(75,192,192,0.2)" stroke="rgb(75,192,192)" stroke-width="1"/><circle cx="82.86" cy="209.00" r="3" fill="rgba(75,192,192,0.2)" stroke="rgb(75,192,192)" stroke-width="1"/><circle cx="96.04" cy="209.00" r="3" fill="rgba(75,192,192,0.2)" stroke="rgb(75,192,192)" stroke-width="1"/><circle cx="109.22" cy="209.00" r="3" fill="rgba(75,192,192,0.2)" stroke="rgb(75,192,192)" stroke-width="1"/><circle cx="122.40" cy="187.18" r="3" fill="rgba(75,192,192,0.2)" stroke="rgb(75,192,192)" stroke-width="1"/><circle cx="135.58" cy="189.59" r="3" fill="rgba(75,192,192,0.2)" stroke="rgb(75,192,192)" stroke-width="1"/><circle cx="148.76" cy="199.37" r="3" fill="rgba(75,192,192,0.2)" stroke="rgb(75,192,192)" stroke-width="1"/><circle cx="161.94" cy="209.00" r="3" fill="rgba(75,192,192,0.2)" stroke="rgb(75,192,192)" stroke-width="1"/><circle cx="175.12" cy="189.17" r="3" fill="rgba(75,192,192,0.2)" stroke="rgb(75,192,192)" stroke-width="1"/><circle cx="188.30" cy="173.02" r="3" fill="rgba(75,192,192,0.2)" stroke="rgb(75,192,192)" stroke-width="1"/><circle cx="201.48" cy="205.10" r="3" fill="rgba(75,192,192,0.2)" stroke="rgb(75,192,192)" stroke-width="1"/><circle cx="214.66" cy="203.48" r="3" fill="rgba(75,192,192,0.2)" stroke="rgb(75,192,192)" stroke-width="1"/><circle cx="227.84" cy="195.26" r="3" fill="rgba(75,192,192,0.2)" stroke="rgb(75,192,192)" stroke-width="1"/><circle cx="241.02" cy="204.47" r="3" fill="rgba(75,192,192,0.2)" stroke="rgb(75,192,192)" stroke-width="1"/><circle cx="254.20" cy="209.00" r="3" fill="rgba(75,192,192,0.2)" stroke="rgb(75,192,192)" stroke-width="1"/><circle cx="267.38" cy="209.00" r="3" fill="rgba(75,192,192,0.2)" stroke="rgb(75,192,192)" stroke-width="1"/><circle cx="280.56" cy="209.00" r="3" fill="rgba(75,192,192,0.2)" stroke="rgb(75,192,192)" stroke-width="1"/><circle cx="293.74" cy="209.00" r="3" fill="rgba(75,192,192,0.2)" stroke="rgb(75,192,192)" stroke-width="1"/><circle cx="306.92" cy="209.00" r="3" fill="rgba(75,192,192,0.2)" stroke="rgb(75,192,192)" stroke-width="1"/><circle cx="320.10" cy="209.00" r="3" fill="rgba(75,192,192,0.2)" stroke="rgb(75,192,192)" stroke-width="1"/><circle cx="333.28" cy="209.00" r="3" fill="rgba(75,192,192,0.2)" stroke="rgb(75,192,192)" stroke-width="1"/><circle cx="346.46" cy="209.00" r="3" fill="rgba(75,192,192,0.2)" stroke="rgb(75,192,192)" stroke-width="1"/><circle cx="359.64" cy="209.00" r="3" fill="rgba(75,192,192,0.2)" stroke="rgb(75,192,192)" stroke-width="1"/><circle cx="372.82" cy="209.00" r="3" fill="rgba(75,192,192,0.2)" stroke="rgb(75,192,192)" stroke-width="1"/><circle cx="386.00" cy="209.00" r="3" fill="rgba(75,192,192,0.2)" stroke="rgb(75,192,192)" stroke-width="1"/><circle cx="399.18" cy="209.00" r="3" fill="rgba(75,192,192,0.2)" stroke="rgb(75,192,192)" stroke-width="1"/><circle cx="412.36" cy="209.00" r="3" fill="rgba(75,192,192,0.2)" stroke="rgb(75,192,192)" stroke-width="1"/><circle cx="425.54" cy="209.00" r="3" fill="rgba(75,192,192,0.2)" stroke="rgb(75,192,192)" stroke-width="1"/><circle cx="438.72" cy="209.00" r="3" fill="rgba(75,192,192,0.2)" stroke="rgb(75,192,192)" stroke-width="1"/><circle cx="451.90" cy="209.00" r="3" fill="rgba(75,192,192,0.2)" stroke="rgb(75,192,192)" stroke-width="1"/><rect x="173.5" y="22.5" width="30" height="9" fill="rgba(75,192,192,0.2)" stroke="rgb(75,192,192)" stroke-width="1"/><text x="208" y="30.5" font-family="Liberation Sans" font-size="9.5" fill="#666">Loja 1</text><rect x="240.5" y="22.5" width="30" height="9" fill="rgba(255,159,64,0.2)" stroke="rgb(255,159,64)" stroke-width="1"/><text x="275" y="30.5" font-family="Liberation Sans" font-size="9.5" fill="#666">Loja 2</text></svg>
<div class="r" style="left:190px;top:668px;width:310px;height:131px;background:#fff;box-shadow:0 4px 10px rgba(40,60,90,0.05);"></div>
<div class="r" style="left:515px;top:668px;width:310px;height:131px;background:#fff;box-shadow:0 4px 10px rgba(40,60,90,0.05);"></div>
<div class="r" style="left:840px;top:668px;width:310px;height:131px;background:#fff;box-shadow:0 4px 10px rgba(40,60,90,0.05);"></div>
<svg class="r" style="left:207px;top:697px;" width="27" height="22" viewBox="0 0 27 22"><g fill="#464a5a"><rect x="0.6" y="0.6" width="4.5" height="4.6" rx="0.8"/><rect x="0.6" y="9" width="4.5" height="4.6" rx="0.8"/><rect x="0.6" y="17" width="4.5" height="4.6" rx="0.8"/><rect x="7.2" y="1.2" width="19.6" height="3.6" rx="1"/><rect x="7.2" y="9.5" width="19.6" height="3.6" rx="1"/><rect x="7.2" y="17.5" width="19.6" height="3.6" rx="1"/></g></svg>
<div class="t " style="left:207.50px;top:731.68px;font-size:13.6px;line-height:15.20px;color:#3f4553;letter-spacing:0.124px;">Lista de</div>
<div class="t " style="left:207.50px;top:748.68px;font-size:13.6px;line-height:15.20px;color:#3f4553;letter-spacing:-0.112px;">Compras</div>
<div class="t " style="left:458.00px;top:687.22px;font-size:10.8px;line-height:12.07px;color:#454b57;letter-spacing:0.047px;">Total</div>
<div class="t " style="left:343.50px;top:700.81px;font-size:18.2px;line-height:20.35px;color:#1fb394;font-weight:700;letter-spacing:0.208px;">R$ 1.256.677,00</div>
<div class="t " style="left:434.00px;top:728.22px;font-size:10.8px;line-height:12.07px;color:#454b57;letter-spacing:-0.278px;">Cadastros</div>
<div class="t " style="left:450.00px;top:741.81px;font-size:18.2px;line-height:20.35px;color:#1fb394;font-weight:700;letter-spacing:0.317px;">149</div>
<svg class="r" style="left:533px;top:695px;" width="26" height="26" viewBox="0 0 26 26"><circle cx="12.8" cy="12.9" r="12.6" fill="#34495e"/><path d="M12.8 6 V14 L16 16.6" stroke="#fff" stroke-width="3.6" fill="none" stroke-linejoin="miter"/></svg>
<div class="t " style="left:533.00px;top:731.68px;font-size:13.6px;line-height:15.20px;color:#3f4553;letter-spacing:0.019px;">Clientes em</div>
<div class="t " style="left:533.00px;top:748.68px;font-size:13.6px;line-height:15.20px;color:#3f4553;letter-spacing:0.339px;">Atraso</div>
<div class="t " style="left:784.00px;top:687.22px;font-size:10.8px;line-height:12.07px;color:#454b57;letter-spacing:0.047px;">Total</div>
<div class="t " style="left:684.00px;top:700.81px;font-size:18.2px;line-height:20.35px;color:#ec1745;font-weight:700;letter-spacing:0.299px;">R$ 101.484,00</div>
<div class="t " style="left:753.00px;top:728.22px;font-size:10.8px;line-height:12.07px;color:#454b57;letter-spacing:-0.272px;">Pendências</div>
<div class="t " style="left:775.00px;top:741.81px;font-size:18.2px;line-height:20.35px;color:#ec1745;font-weight:700;letter-spacing:0.817px;">524</div>
<svg class="r" style="left:857px;top:694px;" width="31" height="28" viewBox="0 0 31 28"><path d="M15.5 1.5 C16.5 1.5 17.3 2 17.8 2.9 L29.6 24 C30.6 25.8 29.4 27 27.6 27 H3.4 C1.6 27 0.4 25.8 1.4 24 L13.2 2.9 C13.7 2 14.5 1.5 15.5 1.5 Z" fill="#34495e"/><rect x="13.2" y="9" width="4.6" height="8.5" fill="#fff"/><circle cx="15.5" cy="21.6" r="2.5" fill="#fff"/></svg>
<div class="t " style="left:858.00px;top:730.68px;font-size:13.6px;line-height:15.20px;color:#3f4553;letter-spacing:-0.127px;">Clientes no SPC</div>
<div class="t " style="left:1108.50px;top:687.22px;font-size:10.8px;line-height:12.07px;color:#454b57;letter-spacing:0.072px;">Total</div>
<div class="t " style="left:1067.00px;top:700.81px;font-size:18.2px;line-height:20.35px;color:#ec1745;font-weight:700;letter-spacing:0.142px;">R$ 0,00</div>
<div class="t " style="left:1087.70px;top:728.22px;font-size:10.8px;line-height:12.07px;color:#454b57;letter-spacing:-0.215px;">Registros</div>
<div class="t " style="left:1121.48px;top:741.81px;font-size:18.2px;line-height:20.35px;color:#ec1745;font-weight:700;">0</div>
<div class="r" style="left:190px;top:814px;width:228px;height:130px;background:#fff;box-shadow:0 4px 10px rgba(40,60,90,0.05);"></div>
<div class="r" style="left:433px;top:814px;width:229px;height:130px;background:#fff;box-shadow:0 4px 10px rgba(40,60,90,0.05);"></div>
<div class="r" style="left:677px;top:814px;width:229px;height:130px;background:#fff;box-shadow:0 4px 10px rgba(40,60,90,0.05);"></div>
<div class="r" style="left:921px;top:814px;width:229px;height:130px;background:#fff;box-shadow:0 4px 10px rgba(40,60,90,0.05);"></div>
<svg class="r" style="left:207px;top:843px;" width="34" height="22" viewBox="0 0 34 22"><g fill="#464a5a"><circle cx="16.9" cy="6.5" r="5.3"/><circle cx="6.2" cy="9.5" r="3.4"/><circle cx="27.5" cy="9.5" r="3.4"/><path d="M8.6 14.8 C8.6 13.2 9.8 12 11.5 12 H22.3 C24 12 25.2 13.2 25.2 14.8 V19.5 C25.2 20.3 24.5 21 23.7 21 H10.1 C9.3 21 8.6 20.3 8.6 19.5 Z"/><path d="M0.6 16.5 C0.6 15 1.7 14 3.2 14 H8 C7.5 14.7 7.2 15.5 7.2 16.3 V19.2 H1.5 C1 19.2 0.6 18.8 0.6 18.3 Z"/><path d="M33.2 16.5 C33.2 15 32.1 14 30.6 14 H25.8 C26.3 14.7 26.6 15.5 26.6 16.3 V19.2 H32.3 C32.8 19.2 33.2 18.8 33.2 18.3 Z"/></g></svg>
<div class="t " style="left:207.50px;top:876.68px;font-size:13.6px;line-height:15.20px;color:#3f4553;letter-spacing:0.138px;">Clientes</div>
<div class="t " style="left:377.00px;top:833.22px;font-size:10.8px;line-height:12.07px;color:#454b57;letter-spacing:0.047px;">Total</div>
<div class="t " style="left:353.00px;top:847.81px;font-size:18.2px;line-height:20.35px;color:#1fb394;font-weight:700;letter-spacing:0.364px;">7.066</div>
<div class="t " style="left:353.00px;top:873.22px;font-size:10.8px;line-height:12.07px;color:#454b57;letter-spacing:-0.278px;">Cadastros</div>
<div class="t " style="left:389.88px;top:887.81px;font-size:18.2px;line-height:20.35px;color:#1fb394;font-weight:700;">2</div>
<svg class="r" style="left:451px;top:841px;" width="27" height="26" viewBox="0 0 27 26"><path d="M0.4 2.5 A2.2 2.2 0 0 1 2.6 0.3 H12 C12.8 0.3 13.5 0.6 14 1.1 L25.8 12.9 C26.7 13.8 26.7 15.2 25.8 16.1 L16.1 25.8 C15.2 26.7 13.8 26.7 12.9 25.8 L1.1 14 C0.6 13.5 0.4 12.8 0.4 12 Z" fill="#464a5a"/><circle cx="6.3" cy="5.9" r="2.6" fill="#fff"/></svg>
<div class="t " style="left:451.50px;top:876.68px;font-size:13.6px;line-height:15.20px;color:#3f4553;letter-spacing:0.152px;">Produtos</div>
<div class="t " style="left:621.00px;top:833.22px;font-size:10.8px;line-height:12.07px;color:#454b57;letter-spacing:0.097px;">Total</div>
<div class="t " style="left:596.80px;top:847.81px;font-size:18.2px;line-height:20.35px;color:#1fb394;font-weight:700;letter-spacing:0.464px;">3.795</div>
<div class="t " style="left:597.00px;top:873.22px;font-size:10.8px;line-height:12.07px;color:#454b57;letter-spacing:-0.253px;">Cadastros</div>
<div class="t " style="left:623.00px;top:887.81px;font-size:18.2px;line-height:20.35px;color:#1fb394;font-weight:700;letter-spacing:0.955px;">38</div>
<svg class="r" style="left:695px;top:843px;" width="34" height="22" viewBox="0 0 34 22"><g fill="#464a5a"><path d="M0.3 3.4 H4.6 V15.5 C4.6 16.5 3.8 17.3 2.8 17.3 H0.3 Z"/><path d="M33 3.4 H28.7 V15.5 C28.7 16.5 29.5 17.3 30.5 17.3 H33 Z"/><path d="M6.2 3.4 L9.8 0.4 H14.7 L9.6 4.9 C8 6.3 8.3 8.8 10.2 9.8 C11.5 10.5 13 10.3 14 9.3 L17 6.5 L25.4 13.6 L26.5 12.8 V3.4 L23.3 0.4 H16.8 L11 5.7 C10.4 6.3 10.5 7.1 11.1 7.5 C11.6 7.9 12.3 7.8 12.7 7.4 L17 3.6 L26.4 11.6 V15.2 L24.6 14.2 L17.4 8 L14.8 10.7 C12.9 12.5 10 12.6 8.1 10.9 C7.2 10 6.2 9 6.2 7.5 Z"/><path d="M6.2 15.2 L12.4 21 C13.1 21.6 14 21.6 14.6 21 L15.4 20 L16.6 21 C17.2 21.5 18 21.5 18.5 21 L20.6 18.6 C21.3 19 22 18.9 22.5 18.3 L24.5 16 L17.3 9.8 L15.5 11.6 C13.2 14 9.5 13.9 7.4 11.5 L6.2 10.3 Z"/></g><circle cx="2.4" cy="14.4" r="1" fill="#fff"/><circle cx="30.9" cy="14.4" r="1" fill="#fff"/></svg>
<div class="t " style="left:695.50px;top:876.68px;font-size:13.6px;line-height:15.20px;color:#3f4553;letter-spacing:-0.219px;">Fornecedores</div>
<div class="t " style="left:865.00px;top:833.22px;font-size:10.8px;line-height:12.07px;color:#454b57;letter-spacing:0.047px;">Total</div>
<div class="t " style="left:856.00px;top:847.81px;font-size:18.2px;line-height:20.35px;color:#1fb394;font-weight:700;letter-spacing:0.817px;">441</div>
<div class="t " style="left:841.00px;top:873.22px;font-size:10.8px;line-height:12.07px;color:#454b57;letter-spacing:-0.278px;">Cadastros</div>
<div class="t " style="left:877.88px;top:887.81px;font-size:18.2px;line-height:20.35px;color:#1fb394;font-weight:700;">0</div>
<svg class="r" style="left:939px;top:841px;" width="27" height="27" viewBox="0 0 27 27"><circle cx="13.2" cy="8.2" r="7.9" fill="#464a5a"/><path d="M0.4 22.3 C0.4 18.4 3.2 15.8 6.8 15.8 C8.3 15.8 9.8 17.2 13.2 17.2 C16.6 17.2 18.1 15.8 19.6 15.8 C23.2 15.8 26 18.4 26 22.3 V24 C26 25.2 25 26.2 23.8 26.2 H2.6 C1.4 26.2 0.4 25.2 0.4 24 Z" fill="#464a5a"/></svg>
<div class="t " style="left:939.50px;top:876.68px;font-size:13.6px;line-height:15.20px;color:#3f4553;letter-spacing:-0.024px;">Usuários</div>
<div class="t " style="left:1103.00px;top:833.22px;font-size:10.8px;line-height:12.07px;color:#454b57;letter-spacing:-0.082px;">Ativos</div>
<div class="t " style="left:1121.88px;top:847.81px;font-size:18.2px;line-height:20.35px;color:#1fb394;font-weight:700;">7</div>
<div class="t " style="left:1108.50px;top:873.22px;font-size:10.8px;line-height:12.07px;color:#454b57;letter-spacing:0.172px;">Total</div>
<div class="t " style="left:1121.88px;top:887.81px;font-size:18.2px;line-height:20.35px;color:#1fb394;font-weight:700;">8</div>
<div class="r" style="left:1166px;top:105px;width:671px;height:900px;background:#201e23;"></div>
<div class="r" style="left:1165px;top:106px;width:1px;height:899px;background:#4b4254;"></div>
<div class="r" style="left:1166px;top:106px;width:671px;height:26px;background:#382e43;"></div>
<div class="r" style="left:1166px;top:132px;width:671px;height:1px;background:#4b4254;"></div>
<div class="r" style="left:1166px;top:133px;width:671px;height:77px;background:#201e23;"></div>
<div class="r" style="left:1166px;top:159px;width:671px;height:1px;background:#3a3441;"></div>
<div class="r" style="left:1166px;top:210px;width:671px;height:1px;background:#4b4254;"></div>
<svg class="r" style="left:1174px;top:111px;" width="16" height="16" viewBox="0 0 16 16"><g fill="#d8d1de"><rect x="0.5" y="0.8" width="2" height="2"/><rect x="4" y="0.8" width="2" height="2"/><rect x="7.5" y="0.8" width="2" height="2"/><rect x="11" y="0.8" width="2" height="2"/><rect x="0.5" y="4.3" width="2" height="2"/><rect x="0.5" y="7.8" width="2" height="2"/><rect x="0.5" y="11.3" width="2" height="2"/><rect x="4" y="13" width="2" height="2"/><rect x="11" y="4.3" width="2" height="2"/></g><path d="M6.5 6.5 H14 M6.5 6.5 V14 M6.8 6.8 L14.8 14.8" stroke="#d8d1de" stroke-width="1.6"/></svg>
<svg class="r" style="left:1201px;top:112px;" width="18" height="14" viewBox="0 0 18 14"><path d="M3 1 H14 V4 M3 1 V11 M0.5 12.5 H9" stroke="#d8d1de" stroke-width="1.4" fill="none"/><rect x="11" y="5" width="5.5" height="8" rx="0.5" stroke="#d8d1de" stroke-width="1.4" fill="none"/></svg>
<div class="r" style="left:1228px;top:111px;width:1px;height:16px;background:#5a5063;"></div>
<div class="t " style="left:1241.00px;top:113.22px;font-size:13px;line-height:14.53px;color:#e4dfe9;letter-spacing:-0.199px;">Elements</div>
<div class="t " style="left:1315.20px;top:113.22px;font-size:13px;line-height:14.53px;color:#e4dfe9;letter-spacing:-0.150px;">Console</div>
<div class="t " style="left:1382.10px;top:113.22px;font-size:13px;line-height:14.53px;color:#e4dfe9;letter-spacing:-0.182px;">Sources</div>
<div class="t " style="left:1450.00px;top:113.22px;font-size:13px;line-height:14.53px;color:#cfa6f9;letter-spacing:0.054px;">Network</div>
<div class="t " style="left:1519.00px;top:113.22px;font-size:13px;line-height:14.53px;color:#e4dfe9;letter-spacing:-0.042px;">Performance</div>
<div class="t " style="left:1614.00px;top:113.22px;font-size:13px;line-height:14.53px;color:#e4dfe9;letter-spacing:0.010px;">Memory</div>
<div class="t " style="left:1682.00px;top:113.22px;font-size:13px;line-height:14.53px;color:#e4dfe9;letter-spacing:0.140px;">Application</div>
<div class="r" style="left:1440px;top:129.5px;width:69px;height:3.0px;background:#cfa6f9;border-radius:2px 2px 0 0;"></div>
<svg class="r" style="left:1761px;top:115px;" width="14" height="9" viewBox="0 0 14 9"><path d="M1 0.8 L5 4.5 L1 8.2 M7 0.8 L11 4.5 L7 8.2" stroke="#d8d1de" stroke-width="1.4" fill="none"/></svg>
<svg class="r" style="left:1786px;top:113px;" width="12" height="12" viewBox="0 0 12 12"><path d="M0.5 0.8 H11.2 V9.2 H3 L0.5 11.5 Z" fill="#f1463f"/><path d="M3.8 2.8 L7.8 6.8 M7.8 2.8 L3.8 6.8" stroke="#201e23" stroke-width="1.3"/></svg>
<div class="t " style="left:1800.50px;top:113.22px;font-size:13px;line-height:14.53px;color:#e4dfe9;">1</div>
<div class="r" style="left:1814px;top:111px;width:1px;height:16px;background:#5a5063;"></div>
<svg class="r" style="left:1825px;top:111px;" width="14" height="16" viewBox="0 0 14 16"><circle cx="8" cy="8" r="5.5" stroke="#d8d1de" stroke-width="1.5" fill="none" stroke-dasharray="3 1.3"/><circle cx="8" cy="8" r="2.3" fill="#d8d1de"/></svg>
<svg class="r" style="left:1174px;top:138px;" width="16" height="16" viewBox="0 0 16 16"><circle cx="8" cy="8" r="6.6" stroke="#f2473e" stroke-width="1.6" fill="none"/><rect x="4.9" y="4.9" width="6.2" height="6.2" fill="#f2473e"/></svg>
<svg class="r" style="left:1201px;top:138px;" width="17" height="17" viewBox="0 0 17 17"><circle cx="8.5" cy="8.5" r="6.8" stroke="#d8d1de" stroke-width="1.5" fill="none"/><path d="M4 13 L13 4" stroke="#d8d1de" stroke-width="1.5"/></svg>
<div class="r" style="left:1228px;top:138px;width:1px;height:17px;background:#4a4452;"></div>
<svg class="r" style="left:1240px;top:140px;" width="14" height="13" viewBox="0 0 14 13"><path d="M0.5 0.5 H13.5 L8.5 6.5 V12.5 L5.5 11 V6.5 Z" fill="#c891f5"/></svg>
<svg class="r" style="left:1267px;top:139px;" width="15" height="15" viewBox="0 0 15 15"><circle cx="5.8" cy="5.8" r="4.6" stroke="#d8d1de" stroke-width="1.5" fill="none"/><path d="M9.2 9.2 L14 14" stroke="#d8d1de" stroke-width="1.6" stroke-linecap="round"/></svg>
<div class="r" style="left:1293px;top:138px;width:1px;height:17px;background:#4a4452;"></div>
<div class="r" style="left:1304px;top:141px;width:12px;height:11px;background:#3b393f;border:1px solid #77727c;border-radius:2px;box-sizing:border-box;"></div>
<div class="t " style="left:1322.50px;top:139.92px;font-size:13px;line-height:14.53px;color:#e4dfe9;letter-spacing:-0.298px;">Preserve log</div>
<div class="r" style="left:1402px;top:138px;width:1px;height:17px;background:#4a4452;"></div>
<div class="r" style="left:1413px;top:141px;width:12px;height:11px;background:#3b393f;border:1px solid #77727c;border-radius:2px;box-sizing:border-box;"></div>
<div class="t " style="left:1430.00px;top:139.92px;font-size:13px;line-height:14.53px;color:#e4dfe9;letter-spacing:-0.222px;">Disable cache</div>
<div class="t " style="left:1523.00px;top:139.92px;font-size:13px;line-height:14.53px;color:#e4dfe9;letter-spacing:0.076px;">No throttling</div>
<svg class="r" style="left:1613px;top:143px;" width="10" height="6" viewBox="0 0 10 6"><path d="M0.5 0.5 H9.5 L5 5.5 Z" fill="#8e8896"/></svg>
<svg class="r" style="left:1633px;top:138px;" width="19" height="16" viewBox="0 0 19 16"><path d="M1.5 6 A10 10 0 0 1 16.5 6 M4 8.8 A6.3 6.3 0 0 1 14 8.8 M6.6 11.4 A2.8 2.8 0 0 1 11.4 11.4" stroke="#d8d1de" stroke-width="1.5" fill="none"/><circle cx="9" cy="13.8" r="1.2" fill="#d8d1de"/><circle cx="15" cy="12.5" r="2.4" stroke="#d8d1de" stroke-width="1.2" fill="#201e23"/></svg>
<div class="r" style="left:1660px;top:138px;width:1px;height:17px;background:#4a4452;"></div>
<svg class="r" style="left:1671px;top:138px;" width="15" height="15" viewBox="0 0 15 15"><path d="M7.5 11 V1.5 M3.5 5.5 L7.5 1.5 L11.5 5.5 M1.2 10 V13.5 H13.8 V10" stroke="#d8d1de" stroke-width="1.5" fill="none" stroke-linejoin="round"/></svg>
<svg class="r" style="left:1700px;top:138px;" width="15" height="15" viewBox="0 0 15 15"><path d="M7.5 1 V10.5 M3.5 6.5 L7.5 10.5 L11.5 6.5 M1.2 10 V13.5 H13.8 V10" stroke="#d8d1de" stroke-width="1.5" fill="none" stroke-linejoin="round"/></svg>
<div class="r" style="left:1171px;top:163px;width:551px;height:20px;background:#392f45;border-radius:10px;"></div>
<svg class="r" style="left:1182px;top:168px;" width="10" height="11" viewBox="0 0 10 11"><path d="M0.7 0.8 H9.3 L5.8 5 V10 M4.2 10 V5 L0.7 0.8" stroke="#d8d1de" stroke-width="1.2" fill="none" stroke-linejoin="round"/></svg>
<div class="t " style="left:1199.20px;top:166.59px;font-size:12.7px;line-height:14.20px;color:#d6cfdc;letter-spacing:-0.025px;">Filter</div>
<div class="r" style="left:1734px;top:167px;width:12px;height:12px;background:#3b393f;border:1px solid #77727c;border-radius:2px;box-sizing:border-box;"></div>
<div class="t " style="left:1752.70px;top:166.42px;font-size:13px;line-height:14.53px;color:#e4dfe9;letter-spacing:-0.183px;">Invert</div>
<div class="r" style="left:1796px;top:165px;width:1px;height:16px;background:#4a4452;"></div>
<div class="t " style="left:1814.80px;top:166.42px;font-size:13px;line-height:14.53px;color:#e4dfe9;">More filters</div>
<div class="r" style="left:1170px;top:189.5px;width:25.59999999999991px;height:18.5px;background:#4a4054;border-radius:7px;"></div>
<div class="t " style="left:1176.00px;top:192.53px;font-size:12px;line-height:13.42px;color:#e4dfe9;font-weight:700;letter-spacing:-0.967px;">All</div>
<div class="r" style="left:1200px;top:191px;width:1px;height:15px;background:#4a4452;"></div>
<div class="r" style="left:1205px;top:189.5px;width:68.79999999999995px;height:18.5px;background:transparent;border:1px solid #5d5665;border-radius:7px;box-sizing:border-box;"></div>
<div class="t " style="left:1211.00px;top:192.53px;font-size:12px;line-height:13.42px;color:#e4dfe9;letter-spacing:-0.235px;-webkit-text-stroke:0.3px #e4dfe9;">Fetch/XHR</div>
<div class="r" style="left:1278px;top:189.5px;width:32.59999999999991px;height:18.5px;background:transparent;border:1px solid #5d5665;border-radius:7px;box-sizing:border-box;"></div>
<div class="t " style="left:1284.00px;top:192.53px;font-size:12px;line-height:13.42px;color:#e4dfe9;letter-spacing:-0.370px;-webkit-text-stroke:0.3px #e4dfe9;">Doc</div>
<div class="r" style="left:1315.2px;top:189.5px;width:33.799999999999955px;height:18.5px;background:transparent;border:1px solid #5d5665;border-radius:7px;box-sizing:border-box;"></div>
<div class="t " style="left:1321.20px;top:192.53px;font-size:12px;line-height:13.42px;color:#e4dfe9;letter-spacing:-1.438px;-webkit-text-stroke:0.3px #e4dfe9;">CSS</div>
<div class="r" style="left:1353px;top:189.5px;width:25.799999999999955px;height:18.5px;background:transparent;border:1px solid #5d5665;border-radius:7px;box-sizing:border-box;"></div>
<div class="t " style="left:1359.00px;top:192.53px;font-size:12px;line-height:13.42px;color:#e4dfe9;letter-spacing:-0.204px;-webkit-text-stroke:0.3px #e4dfe9;">JS</div>
<div class="r" style="left:1383px;top:189.5px;width:35.90000000000009px;height:18.5px;background:transparent;border:1px solid #5d5665;border-radius:7px;box-sizing:border-box;"></div>
<div class="t " style="left:1389.00px;top:192.53px;font-size:12px;line-height:13.42px;color:#e4dfe9;letter-spacing:-0.037px;-webkit-text-stroke:0.3px #e4dfe9;">Font</div>
<div class="r" style="left:1423px;top:189.5px;width:31.799999999999955px;height:18.5px;background:transparent;border:1px solid #5d5665;border-radius:7px;box-sizing:border-box;"></div>
<div class="t " style="left:1429.00px;top:192.53px;font-size:12px;line-height:13.42px;color:#e4dfe9;letter-spacing:-0.102px;-webkit-text-stroke:0.3px #e4dfe9;">Img</div>
<div class="r" style="left:1459px;top:189.5px;width:43.799999999999955px;height:18.5px;background:transparent;border:1px solid #5d5665;border-radius:7px;box-sizing:border-box;"></div>
<div class="t " style="left:1465.00px;top:192.53px;font-size:12px;line-height:13.42px;color:#e4dfe9;letter-spacing:-0.221px;-webkit-text-stroke:0.3px #e4dfe9;">Media</div>
<div class="r" style="left:1507px;top:189.5px;width:58.5px;height:18.5px;background:transparent;border:1px solid #5d5665;border-radius:7px;box-sizing:border-box;"></div>
<div class="t " style="left:1513.00px;top:192.53px;font-size:12px;line-height:13.42px;color:#e4dfe9;letter-spacing:0.164px;-webkit-text-stroke:0.3px #e4dfe9;">Manifest</div>
<div class="r" style="left:1570px;top:189.5px;width:29.40000000000009px;height:18.5px;background:transparent;border:1px solid #5d5665;border-radius:7px;box-sizing:border-box;"></div>
<div class="t " style="left:1576.00px;top:192.53px;font-size:12px;line-height:13.42px;color:#e4dfe9;letter-spacing:-1.930px;-webkit-text-stroke:0.3px #e4dfe9;">WS</div>
<div class="r" style="left:1604px;top:189.5px;width:43.700000000000045px;height:18.5px;background:transparent;border:1px solid #5d5665;border-radius:7px;box-sizing:border-box;"></div>
<div class="t " style="left:1610.00px;top:192.53px;font-size:12px;line-height:13.42px;color:#e4dfe9;letter-spacing:-0.617px;-webkit-text-stroke:0.3px #e4dfe9;">Wasm</div>
<div class="r" style="left:1652px;top:189.5px;width:42.5px;height:18.5px;background:transparent;border:1px solid #5d5665;border-radius:7px;box-sizing:border-box;"></div>
<div class="t " style="left:1658.00px;top:192.53px;font-size:12px;line-height:13.42px;color:#e4dfe9;letter-spacing:0.122px;-webkit-text-stroke:0.3px #e4dfe9;">Other</div>
<div class="r" style="left:1166px;top:211px;width:671px;height:80px;background:#201e23;"></div>
<div class="r" style="left:1166px;top:291px;width:671px;height:1px;background:#4b4254;"></div>
<div class="r" style="left:1166px;top:211px;width:2.5px;height:80px;background:#5b5265;"></div>
<div class="r" style="left:1166px;top:212px;width:5px;height:17px;background:#3a3342;border-radius:0 3px 3px 0;border:1px solid #5b5363;box-sizing:border-box;"></div>
<div class="r" style="left:1167.5px;top:216px;width:1.5px;height:9px;background:#c9a0f7;"></div>
<div class="r" style="left:1229.8px;top:211px;width:1.0px;height:80px;background:#4a4351;"></div>
<div class="t " style="left:1182.55px;top:214.23px;font-size:11px;line-height:12.30px;color:#e4dfe9;">2,000 ms</div>
<div class="r" style="left:1295.0px;top:211px;width:1.0px;height:80px;background:#4a4351;"></div>
<div class="t " style="left:1247.75px;top:214.23px;font-size:11px;line-height:12.30px;color:#e4dfe9;">4,000 ms</div>
<div class="r" style="left:1359.0px;top:211px;width:1.0px;height:80px;background:#4a4351;"></div>
<div class="t " style="left:1311.75px;top:214.23px;font-size:11px;line-height:12.30px;color:#e4dfe9;">6,000 ms</div>
<div class="r" style="left:1423.8px;top:211px;width:1.0px;height:80px;background:#4a4351;"></div>
<div class="t " style="left:1376.55px;top:214.23px;font-size:11px;line-height:12.30px;color:#e4dfe9;">8,000 ms</div>
<div class="r" style="left:1488.1px;top:211px;width:1.0px;height:80px;background:#4a4351;"></div>
<div class="t " style="left:1434.74px;top:214.23px;font-size:11px;line-height:12.30px;color:#e4dfe9;">10,000 ms</div>
<div class="r" style="left:1553.0px;top:211px;width:1.0px;height:80px;background:#4a4351;"></div>
<div class="t " style="left:1499.64px;top:214.23px;font-size:11px;line-height:12.30px;color:#e4dfe9;">12,000 ms</div>
<div class="r" style="left:1617.1px;top:211px;width:1.0px;height:80px;background:#4a4351;"></div>
<div class="t " style="left:1563.74px;top:214.23px;font-size:11px;line-height:12.30px;color:#e4dfe9;">14,000 ms</div>
<div class="r" style="left:1682.0px;top:211px;width:1.0px;height:80px;background:#4a4351;"></div>
<div class="t " style="left:1628.64px;top:214.23px;font-size:11px;line-height:12.30px;color:#e4dfe9;">16,000 ms</div>
<div class="r" style="left:1746.1px;top:211px;width:1.0px;height:80px;background:#4a4351;"></div>
<div class="t " style="left:1692.74px;top:214.23px;font-size:11px;line-height:12.30px;color:#e4dfe9;">18,000 ms</div>
<div class="r" style="left:1810.8px;top:211px;width:1.0px;height:80px;background:#4a4351;"></div>
<div class="t " style="left:1757.44px;top:214.23px;font-size:11px;line-height:12.30px;color:#e4dfe9;">20,000 ms</div>
<div class="t " style="left:1821.64px;top:214.23px;font-size:11px;line-height:12.30px;color:#e4dfe9;">22,000 ms</div>
<div class="r" style="left:1168px;top:239.3px;width:24.40000000000009px;height:2.3999999999999773px;background:#1fa93b;"></div>
<div class="r" style="left:1193px;top:239px;width:4.5px;height:2px;background:#3d7be0;"></div>
<div class="r" style="left:1199px;top:239px;width:6px;height:2px;background:#3d7be0;"></div>
<div class="r" style="left:1206px;top:239px;width:9.5px;height:2px;background:#3d7be0;"></div>
<div class="r" style="left:1196px;top:243px;width:3px;height:2px;background:#3a64b8;"></div>
<div class="r" style="left:1201px;top:243px;width:3.5px;height:2px;background:#3d7be0;"></div>
<div class="r" style="left:1206px;top:243px;width:9.5px;height:2px;background:#3d7be0;"></div>
<div class="r" style="left:1196.5px;top:246px;width:1.5px;height:2px;background:#3d7be0;"></div>
<div class="r" style="left:1200px;top:246px;width:9px;height:2px;background:#3d7be0;"></div>
<div class="r" style="left:1195px;top:249px;width:1px;height:2px;background:#1fa93b;"></div>
<div class="r" style="left:1197px;top:249px;width:2px;height:2px;background:#3d7be0;"></div>
<div class="r" style="left:1200px;top:249px;width:5px;height:2px;background:#3d7be0;"></div>
<div class="r" style="left:1207px;top:249px;width:18.5px;height:2px;background:#3d7be0;"></div>
<div class="r" style="left:1199px;top:252px;width:9.5px;height:2px;background:#3d7be0;"></div>
<div class="r" style="left:1199px;top:255px;width:9.5px;height:2px;background:#3d7be0;"></div>
<div class="r" style="left:1198.5px;top:258px;width:2.5px;height:2px;background:#1fa93b;"></div>
<div class="r" style="left:1202px;top:258px;width:9px;height:2px;background:#3d7be0;"></div>
<div class="r" style="left:1205px;top:261px;width:9px;height:2px;background:#3d7be0;"></div>
<div class="r" style="left:1193.5px;top:236.8px;width:18.5px;height:0.799999999999983px;background:#4a4650;"></div>
<div class="r" style="left:1234px;top:231px;width:1.2000000000000455px;height:60px;background:#8ab4f8;"></div>
<div class="r" style="left:1236px;top:231px;width:1.2000000000000455px;height:60px;background:#f28b82;"></div>
<div class="r" style="left:1235px;top:239.3px;width:107.29999999999995px;height:2.3999999999999773px;background:#1fa93b;"></div>
<div class="r" style="left:1343px;top:239.3px;width:10px;height:2.3999999999999773px;background:#3d7be0;"></div>
<div class="r" style="left:1354px;top:239.3px;width:65px;height:2.3999999999999773px;background:#1fa93b;"></div>
<div class="r" style="left:1420px;top:239.3px;width:9px;height:2.3999999999999773px;background:#3d7be0;"></div>
<div class="r" style="left:1235px;top:248.3px;width:104px;height:2.3999999999999773px;background:#1fa93b;"></div>
<div class="r" style="left:1340px;top:248.3px;width:9px;height:2.3999999999999773px;background:#3d7be0;"></div>
<div class="r" style="left:1238px;top:251.5px;width:9px;height:2.0px;background:#3d7be0;"></div>
<div class="r" style="left:1524.7px;top:239.4px;width:92.29999999999995px;height:2.3999999999999773px;background:#1fa93b;"></div>
<div class="r" style="left:1618px;top:239.4px;width:9.099999999999909px;height:2.3999999999999773px;background:#3d7be0;"></div>
<div class="r" style="left:1524.7px;top:263.1px;width:157.39999999999986px;height:2.3999999999999773px;background:#1fa93b;"></div>
<div class="r" style="left:1683px;top:263.1px;width:9.200000000000045px;height:2.3999999999999773px;background:#3d7be0;"></div>
<div class="r" style="left:1693px;top:263.1px;width:124.5px;height:2.3999999999999773px;background:#1fa93b;"></div>
<div class="r" style="left:1818px;top:263.1px;width:9.799999999999955px;height:2.3999999999999773px;background:#3d7be0;"></div>
<div class="r" style="left:1166px;top:292px;width:671px;height:26px;background:#201e23;"></div>
<div class="r" style="left:1166px;top:318px;width:671px;height:1px;background:#4b4254;"></div>
<div class="r" style="left:1440.0px;top:292px;width:1.0px;height:217px;background:#433d4a;"></div>
<div class="r" style="left:1554.0px;top:292px;width:1.0px;height:217px;background:#433d4a;"></div>
<div class="r" style="left:1637.0px;top:292px;width:1.0px;height:217px;background:#433d4a;"></div>
<div class="r" style="left:1774.0px;top:292px;width:1.0px;height:217px;background:#433d4a;"></div>
<div class="t " style="left:1171.00px;top:297.68px;font-size:12.5px;line-height:13.98px;color:#e4dfe9;letter-spacing:-0.215px;">Name</div>
<div class="t " style="left:1445.00px;top:297.68px;font-size:12.5px;line-height:13.98px;color:#e4dfe9;">Status</div>
<div class="t " style="left:1559.00px;top:297.68px;font-size:12.5px;line-height:13.98px;color:#e4dfe9;">Type</div>
<div class="t " style="left:1641.70px;top:297.68px;font-size:12.5px;line-height:13.98px;color:#e4dfe9;">Initiator</div>
<div class="t " style="left:1779.00px;top:297.68px;font-size:12.5px;line-height:13.98px;color:#e4dfe9;">Size</div>
<div class="r" style="left:1166px;top:319px;width:671px;height:21px;background:#1d1b20;"></div>
<svg class="r" style="left:1171px;top:323px;" width="14" height="13" viewBox="0 0 14 13"><rect x="0.8" y="0.8" width="12" height="11.5" rx="1.5" stroke="#3ab0d8" stroke-width="1.5" fill="none"/><path d="M4 3.8 H9.6 M6.8 3.8 V10" stroke="#3ab0d8" stroke-width="1.5"/></svg>
<div class="t " style="left:1189.00px;top:323.65px;font-size:13.3px;line-height:14.87px;color:#e4dfe9;">fa-solid-900.woff2</div>
<div class="t " style="left:1445.00px;top:323.92px;font-size:13px;line-height:14.53px;color:#e4dfe9;">200</div>
<div class="t " style="left:1559.00px;top:323.92px;font-size:13px;line-height:14.53px;color:#e4dfe9;">font</div>
<div class="t " style="left:1642.00px;top:323.92px;font-size:13px;line-height:14.53px;color:#e4dfe9;text-decoration:underline;text-underline-offset:1.5px;">fontawesome-all.css</div>
<div class="t " style="left:1809.70px;top:323.92px;font-size:13px;line-height:14.53px;color:#e4dfe9;">44.3</div>
<div class="r" style="left:1166px;top:340px;width:671px;height:22px;background:#252228;"></div>
<svg class="r" style="left:1171px;top:344px;" width="14" height="13" viewBox="0 0 14 13"><path d="M4.3 1 C2.5 1 2.8 2.5 2.8 4.5 C2.8 5.8 2.2 6.5 1 6.5 C2.2 6.5 2.8 7.2 2.8 8.5 C2.8 10.5 2.5 12 4.3 12 M9.7 1 C11.5 1 11.2 2.5 11.2 4.5 C11.2 5.8 11.8 6.5 13 6.5 C11.8 6.5 11.2 7.2 11.2 8.5 C11.2 10.5 11.5 12 9.7 12" stroke="#e8843f" stroke-width="1.4" fill="none"/><circle cx="7" cy="4.5" r="0.9" fill="#e8843f"/><path d="M7 7 V9.5" stroke="#e8843f" stroke-width="1.3"/></svg>
<div class="t " style="left:1189.00px;top:344.75px;font-size:13.3px;line-height:14.87px;color:#e4dfe9;">dashboard?loja=2</div>
<div class="t " style="left:1445.00px;top:345.02px;font-size:13px;line-height:14.53px;color:#e4dfe9;">200</div>
<div class="t " style="left:1559.00px;top:345.02px;font-size:13px;line-height:14.53px;color:#e4dfe9;">xhr</div>
<div class="t " style="left:1642.00px;top:345.02px;font-size:13px;line-height:14.53px;color:#e4dfe9;text-decoration:underline;text-underline-offset:1.5px;">app.js:279</div>
<div class="t " style="left:1816.93px;top:345.02px;font-size:13px;line-height:14.53px;color:#e4dfe9;">1.7</div>
<div class="r" style="left:1166px;top:362px;width:671px;height:21px;background:#1d1b20;"></div>
<svg class="r" style="left:1171px;top:365px;" width="14" height="13" viewBox="0 0 14 13"><path d="M4.3 1 C2.5 1 2.8 2.5 2.8 4.5 C2.8 5.8 2.2 6.5 1 6.5 C2.2 6.5 2.8 7.2 2.8 8.5 C2.8 10.5 2.5 12 4.3 12 M9.7 1 C11.5 1 11.2 2.5 11.2 4.5 C11.2 5.8 11.8 6.5 13 6.5 C11.8 6.5 11.2 7.2 11.2 8.5 C11.2 10.5 11.5 12 9.7 12" stroke="#e8843f" stroke-width="1.4" fill="none"/><circle cx="7" cy="4.5" r="0.9" fill="#e8843f"/><path d="M7 7 V9.5" stroke="#e8843f" stroke-width="1.3"/></svg>
<div class="t " style="left:1189.00px;top:365.85px;font-size:13.3px;line-height:14.87px;color:#e4dfe9;">vendas-por-dia?loja=1</div>
<div class="t " style="left:1445.00px;top:366.12px;font-size:13px;line-height:14.53px;color:#e4dfe9;">200</div>
<div class="t " style="left:1559.00px;top:366.12px;font-size:13px;line-height:14.53px;color:#e4dfe9;">xhr</div>
<div class="t " style="left:1642.00px;top:366.12px;font-size:13px;line-height:14.53px;color:#e4dfe9;text-decoration:underline;text-underline-offset:1.5px;">app.js:279</div>
<div class="t " style="left:1816.93px;top:366.12px;font-size:13px;line-height:14.53px;color:#e4dfe9;">1.4</div>
<div class="r" style="left:1166px;top:383px;width:671px;height:21px;background:#252228;"></div>
<svg class="r" style="left:1171px;top:387px;" width="14" height="13" viewBox="0 0 14 13"><rect x="0.8" y="0.8" width="12" height="11.5" rx="1.5" stroke="#e8843f" stroke-width="1.5" fill="none"/><path d="M5.3 4 L3.3 6.5 L5.3 9 M8.7 4 L10.7 6.5 L8.7 9" stroke="#e8843f" stroke-width="1.3" fill="none"/></svg>
<div class="t " style="left:1189.00px;top:386.95px;font-size:13.3px;line-height:14.87px;color:#e4dfe9;">detector-exec.js</div>
<div class="t " style="left:1445.00px;top:387.22px;font-size:13px;line-height:14.53px;color:#e4dfe9;">200</div>
<div class="t " style="left:1559.00px;top:387.22px;font-size:13px;line-height:14.53px;color:#e4dfe9;">script</div>
<div class="t " style="left:1642.00px;top:387.22px;font-size:13px;line-height:14.53px;color:#e4dfe9;text-decoration:underline;text-underline-offset:1.5px;">detector.js:1</div>
<div class="t " style="left:1816.93px;top:387.22px;font-size:13px;line-height:14.53px;color:#e4dfe9;">1.2</div>
<div class="r" style="left:1166px;top:404px;width:671px;height:21px;background:#1d1b20;"></div>
<div class="t " style="left:1174.00px;top:410.04px;font-size:10px;line-height:11.18px;color:#000;">C</div>
<div class="t " style="left:1189.00px;top:408.05px;font-size:13.3px;line-height:14.87px;color:#e4dfe9;">logo-icon-mini.png</div>
<div class="t " style="left:1445.00px;top:408.32px;font-size:13px;line-height:14.53px;color:#e4dfe9;">200</div>
<div class="t " style="left:1559.00px;top:408.32px;font-size:13px;line-height:14.53px;color:#e4dfe9;">png</div>
<div class="t " style="left:1642.00px;top:408.32px;font-size:13px;line-height:14.53px;color:#9c96a3;">Other</div>
<div class="t " style="left:1816.93px;top:408.32px;font-size:13px;line-height:14.53px;color:#e4dfe9;">1.2</div>
<div class="r" style="left:1166px;top:425px;width:671px;height:21px;background:#252228;"></div>
<svg class="r" style="left:1171px;top:429px;" width="14" height="13" viewBox="0 0 14 13"><path d="M4.3 1 C2.5 1 2.8 2.5 2.8 4.5 C2.8 5.8 2.2 6.5 1 6.5 C2.2 6.5 2.8 7.2 2.8 8.5 C2.8 10.5 2.5 12 4.3 12 M9.7 1 C11.5 1 11.2 2.5 11.2 4.5 C11.2 5.8 11.8 6.5 13 6.5 C11.8 6.5 11.2 7.2 11.2 8.5 C11.2 10.5 11.5 12 9.7 12" stroke="#e8843f" stroke-width="1.4" fill="none"/><circle cx="7" cy="4.5" r="0.9" fill="#e8843f"/><path d="M7 7 V9.5" stroke="#e8843f" stroke-width="1.3"/></svg>
<div class="t " style="left:1189.00px;top:429.15px;font-size:13.3px;line-height:14.87px;color:#e4dfe9;">vendas-por-dia?loja=2</div>
<div class="t " style="left:1445.00px;top:429.42px;font-size:13px;line-height:14.53px;color:#e4dfe9;">200</div>
<div class="t " style="left:1559.00px;top:429.42px;font-size:13px;line-height:14.53px;color:#e4dfe9;">xhr</div>
<div class="t " style="left:1642.00px;top:429.42px;font-size:13px;line-height:14.53px;color:#e4dfe9;text-decoration:underline;text-underline-offset:1.5px;">app.js:279</div>
<div class="t " style="left:1816.93px;top:429.42px;font-size:13px;line-height:14.53px;color:#e4dfe9;">1.4</div>
<div class="r" style="left:1166px;top:446px;width:671px;height:21px;background:#1d1b20;"></div>
<svg class="r" style="left:1171px;top:450px;" width="14" height="13" viewBox="0 0 14 13"><path d="M4.3 1 C2.5 1 2.8 2.5 2.8 4.5 C2.8 5.8 2.2 6.5 1 6.5 C2.2 6.5 2.8 7.2 2.8 8.5 C2.8 10.5 2.5 12 4.3 12 M9.7 1 C11.5 1 11.2 2.5 11.2 4.5 C11.2 5.8 11.8 6.5 13 6.5 C11.8 6.5 11.2 7.2 11.2 8.5 C11.2 10.5 11.5 12 9.7 12" stroke="#e8843f" stroke-width="1.4" fill="none"/><circle cx="7" cy="4.5" r="0.9" fill="#e8843f"/><path d="M7 7 V9.5" stroke="#e8843f" stroke-width="1.3"/></svg>
<div class="t " style="left:1189.00px;top:450.25px;font-size:13.3px;line-height:14.87px;color:#e4dfe9;">dashboard?loja=2&amp;mes=3</div>
<div class="t " style="left:1445.00px;top:450.52px;font-size:13px;line-height:14.53px;color:#e4dfe9;">200</div>
<div class="t " style="left:1559.00px;top:450.52px;font-size:13px;line-height:14.53px;color:#e4dfe9;">xhr</div>
<div class="t " style="left:1642.00px;top:450.52px;font-size:13px;line-height:14.53px;color:#e4dfe9;text-decoration:underline;text-underline-offset:1.5px;">app.js:279</div>
<div class="t " style="left:1816.93px;top:450.52px;font-size:13px;line-height:14.53px;color:#e4dfe9;">1.7</div>
<div class="r" style="left:1166px;top:467px;width:671px;height:21px;background:#252228;"></div>
<svg class="r" style="left:1171px;top:471px;" width="14" height="13" viewBox="0 0 14 13"><path d="M4.3 1 C2.5 1 2.8 2.5 2.8 4.5 C2.8 5.8 2.2 6.5 1 6.5 C2.2 6.5 2.8 7.2 2.8 8.5 C2.8 10.5 2.5 12 4.3 12 M9.7 1 C11.5 1 11.2 2.5 11.2 4.5 C11.2 5.8 11.8 6.5 13 6.5 C11.8 6.5 11.2 7.2 11.2 8.5 C11.2 10.5 11.5 12 9.7 12" stroke="#e8843f" stroke-width="1.4" fill="none"/><circle cx="7" cy="4.5" r="0.9" fill="#e8843f"/><path d="M7 7 V9.5" stroke="#e8843f" stroke-width="1.3"/></svg>
<div class="t " style="left:1189.00px;top:471.35px;font-size:13.3px;line-height:14.87px;color:#e4dfe9;">vendas-por-dia?loja=1&amp;mes=3</div>
<div class="t " style="left:1445.00px;top:471.62px;font-size:13px;line-height:14.53px;color:#e4dfe9;">200</div>
<div class="t " style="left:1559.00px;top:471.62px;font-size:13px;line-height:14.53px;color:#e4dfe9;">xhr</div>
<div class="t " style="left:1642.00px;top:471.62px;font-size:13px;line-height:14.53px;color:#e4dfe9;text-decoration:underline;text-underline-offset:1.5px;">app.js:279</div>
<div class="t " style="left:1816.93px;top:471.62px;font-size:13px;line-height:14.53px;color:#e4dfe9;">1.9</div>
<div class="r" style="left:1166px;top:488px;width:671px;height:21px;background:#1d1b20;"></div>
<svg class="r" style="left:1171px;top:492px;" width="14" height="13" viewBox="0 0 14 13"><path d="M4.3 1 C2.5 1 2.8 2.5 2.8 4.5 C2.8 5.8 2.2 6.5 1 6.5 C2.2 6.5 2.8 7.2 2.8 8.5 C2.8 10.5 2.5 12 4.3 12 M9.7 1 C11.5 1 11.2 2.5 11.2 4.5 C11.2 5.8 11.8 6.5 13 6.5 C11.8 6.5 11.2 7.2 11.2 8.5 C11.2 10.5 11.5 12 9.7 12" stroke="#e8843f" stroke-width="1.4" fill="none"/><circle cx="7" cy="4.5" r="0.9" fill="#e8843f"/><path d="M7 7 V9.5" stroke="#e8843f" stroke-width="1.3"/></svg>
<div class="t " style="left:1189.00px;top:492.45px;font-size:13.3px;line-height:14.87px;color:#e4dfe9;">vendas-por-dia?loja=2&amp;mes=3</div>
<div class="t " style="left:1445.00px;top:492.72px;font-size:13px;line-height:14.53px;color:#e4dfe9;">200</div>
<div class="t " style="left:1559.00px;top:492.72px;font-size:13px;line-height:14.53px;color:#e4dfe9;">xhr</div>
<div class="t " style="left:1642.00px;top:492.72px;font-size:13px;line-height:14.53px;color:#e4dfe9;text-decoration:underline;text-underline-offset:1.5px;">app.js:279</div>
<div class="t " style="left:1816.93px;top:492.72px;font-size:13px;line-height:14.53px;color:#e4dfe9;">1.9</div>
<div class="r" style="left:1166px;top:508px;width:671px;height:1px;background:#4b4254;"></div>
<div class="r" style="left:1166px;top:509px;width:671px;height:26px;background:#201e23;"></div>
<div class="t " style="left:1176.60px;top:515.82px;font-size:13px;line-height:14.53px;color:#e4dfe9;letter-spacing:-0.353px;">31 requests</div>
<div class="t " style="left:1260.00px;top:515.82px;font-size:13px;line-height:14.53px;color:#e4dfe9;letter-spacing:-0.180px;">1.2 MB transferred</div>
<div class="t " style="left:1383.70px;top:515.82px;font-size:13px;line-height:14.53px;color:#e4dfe9;letter-spacing:-0.325px;">7.2 MB resources</div>
<div class="t " style="left:1499.80px;top:515.82px;font-size:13px;line-height:14.53px;color:#e4dfe9;letter-spacing:-0.346px;">Finish: 20.21 s</div>
<div class="t " style="left:1599.40px;top:515.82px;font-size:13px;line-height:14.53px;color:#8ab4f8;letter-spacing:-0.349px;">DOMContentLoaded: 2.11 s</div>
<div class="t " style="left:1771.90px;top:515.82px;font-size:13px;line-height:14.53px;color:#f28b82;">Load: 2.16 s</div>
<div class="r" style="left:1250.9px;top:515px;width:1.0px;height:16px;background:#4a4452;"></div>
<div class="r" style="left:1374.0px;top:515px;width:1.0px;height:16px;background:#4a4452;"></div>
<div class="r" style="left:1489.9px;top:515px;width:1.0px;height:16px;background:#4a4452;"></div>
<div class="r" style="left:1589.0px;top:515px;width:1.0px;height:16px;background:#4a4452;"></div>
<div class="r" style="left:1761.1px;top:515px;width:1.0px;height:16px;background:#4a4452;"></div>
<div class="r" style="left:1166px;top:535px;width:671px;height:1px;background:#4b4254;"></div>
<div class="r" style="left:1166px;top:536px;width:671px;height:27px;background:#382e43;"></div>
<div class="r" style="left:1166px;top:563px;width:671px;height:1px;background:#4b4254;"></div>
<svg class="r" style="left:1179px;top:544px;" width="5" height="14" viewBox="0 0 5 14"><circle cx="2.5" cy="2" r="1.3" fill="#d8d1de"/><circle cx="2.5" cy="6.5" r="1.3" fill="#d8d1de"/><circle cx="2.5" cy="11" r="1.3" fill="#d8d1de"/></svg>
<div class="t " style="left:1204.00px;top:543.52px;font-size:13px;line-height:14.53px;color:#e4dfe9;letter-spacing:-0.116px;">Console</div>
<div class="t " style="left:1271.00px;top:543.52px;font-size:13px;line-height:14.53px;color:#e4dfe9;letter-spacing:-0.110px;">AI assistance</div>
<svg class="r" style="left:1353px;top:544px;" width="10" height="13" viewBox="0 0 10 13"><path d="M3 1 H7 M3.8 1 V5 L0.8 11.5 H9.2 L6.2 5 V1" stroke="#d8d1de" stroke-width="1.2" fill="none" stroke-linejoin="round"/></svg>
<div class="t " style="left:1396.00px;top:543.52px;font-size:13px;line-height:14.53px;color:#e4dfe9;letter-spacing:-0.154px;">Issues</div>
<div class="t " style="left:1463.20px;top:543.52px;font-size:13px;line-height:14.53px;color:#d5a6f8;letter-spacing:0.013px;">What&#x27;s new</div>
<svg class="r" style="left:1534px;top:546px;" width="10" height="10" viewBox="0 0 10 10"><path d="M1 1 L9 9 M9 1 L1 9" stroke="#d8d1de" stroke-width="1.3"/></svg>
<div class="r" style="left:1452.8px;top:560.5px;width:98.40000000000009px;height:3.0px;background:#d5a6f8;border-radius:2px 2px 0 0;"></div>
<div class="r" style="left:1166px;top:564px;width:671px;height:441px;background:#353239;"></div>
<svg class="r" style="left:1269px;top:580px;" width="32" height="32" viewBox="0 0 32 32"><circle cx="16" cy="16" r="15.7" fill="#1a6ae0"/><circle cx="16" cy="16" r="12.5" stroke="#fff" stroke-width="1.3" fill="none"/><circle cx="16" cy="16" r="5.2" stroke="#fff" stroke-width="1.3" fill="none"/><path d="M16 10.8 H27.5 M11.5 18.6 L5.2 7.8 M20.6 18.6 L14.8 28.5" stroke="#fff" stroke-width="1.3"/></svg>
<div class="t " style="left:1311.10px;top:586.75px;font-size:16.5px;line-height:18.45px;color:#ece7f0;letter-spacing:-0.058px;-webkit-text-stroke:0.45px #ece7f0;">What&#x27;s new in DevTools 135</div>
<div class="r" style="left:1269px;top:628px;width:134px;height:24px;background:#d8acf9;border-radius:12px;"></div>
<div class="t " style="left:1281.80px;top:632.57px;font-size:12.5px;line-height:13.98px;color:#2e1a47;letter-spacing:-0.272px;">See all new features</div>
<div class="r" style="left:1249.4px;top:671.8px;width:575.8999999999999px;height:368.20000000000005px;background:#1d1b20;border-radius:20px;"></div>
<div class="r" style="left:1269px;top:691.7px;width:329px;height:72.19999999999993px;background:#2c2733;border-radius:12px;"></div>
<svg class="r" style="left:1269px;top:691.7px;" width="118" height="73" viewBox="0 0 118 73"><defs><clipPath id="tc"><path d="M12 0 H117.2 V72.2 H12 A12 12 0 0 1 0 60.2 V12 A12 12 0 0 1 12 0 Z"/></clipPath><radialGradient id="pg" cx="0.5" cy="0.5" r="0.5"><stop offset="0" stop-color="#fff" stop-opacity="0.55"/><stop offset="1" stop-color="#fff" stop-opacity="0"/></radialGradient></defs><g clip-path="url(#tc)"><rect width="117.2" height="72.2" fill="#1b67de"/><g stroke="#ffffff" stroke-opacity="0.28" stroke-width="0.8" fill="none"><path d="M0 8.5 H117 M0 30.2 H117 M0 50.8 H117 M7.5 0 V72 M28.8 0 V72 M50 0 V72 M0 0 L72 72 M58 0 L0 58 M29 0 V72"/><circle cx="28.8" cy="30" r="38"/></g><g stroke="#ffffff" stroke-width="1.1" fill="none"><circle cx="28.8" cy="29.5" r="22"/><circle cx="28.8" cy="29.5" r="16"/><circle cx="28.8" cy="29" r="44"/><path d="M0 8.5 H50 M47 52 L28 80 M0 25 L10 40"/></g><circle cx="58" cy="37" r="22" fill="url(#pg)"/><path d="M50.5 24 C50.5 21.5 53 20 55.5 21.5 L74.5 33 C76.5 34.3 76.5 37.5 74.5 38.8 L55.5 50.5 C53 52 50.5 50.5 50.5 48 Z" fill="#eef1fb"/><rect x="79" y="12.5" width="29.8" height="15.5" rx="3.5" fill="#e9effc"/><text x="93.9" y="24.2" text-anchor="middle" font-family="Liberation Sans" font-weight="700" font-size="11.5" fill="#1b67de">new</text></g></svg>
<div class="t " style="left:1397.70px;top:705.13px;font-size:12px;line-height:13.42px;color:#e6e1ea;letter-spacing:-0.125px;">See the highlights from Chrome 135</div>
<div class="r" style="left:1269px;top:784px;width:536px;height:97.89999999999998px;background:#2c2733;border-radius:14px;"></div>
<div class="t " style="left:1284.60px;top:799.83px;font-size:14.2px;line-height:15.88px;color:#d6a8f9;font-weight:700;letter-spacing:0.084px;text-decoration:underline;text-underline-offset:2px;">Origin and script links for profile and function calls in Performance</div>
<div class="t " style="left:1284.00px;top:831.80px;font-size:12.8px;line-height:14.31px;color:#e6e1ea;letter-spacing:-0.018px;">The Performance &gt; Summary tab now shows links to the relevant scripts and origins for</div>
<div class="t " style="left:1284.00px;top:850.20px;font-size:12.8px;line-height:14.31px;color:#e6e1ea;letter-spacing:0.081px;">profile and function calls.</div>
<div class="r" style="left:1269px;top:902px;width:536px;height:97.5px;background:#2c2733;border-radius:14px;"></div>
<div class="t " style="left:1284.60px;top:917.83px;font-size:14.2px;line-height:15.88px;color:#d6a8f9;font-weight:700;letter-spacing:0.114px;text-decoration:underline;text-underline-offset:2px;">Improved empty states for various panels</div>
<div class="t " style="left:1284.00px;top:949.80px;font-size:12.8px;line-height:14.31px;color:#e6e1ea;">Empty states (when nothing is open) for many panels, tabs, and sections are updated to</div>
<div class="t " style="left:1284.00px;top:968.00px;font-size:12.8px;line-height:14.31px;color:#e6e1ea;letter-spacing:0.072px;">let you know what to do to start working with them.</div>
</body></html>
